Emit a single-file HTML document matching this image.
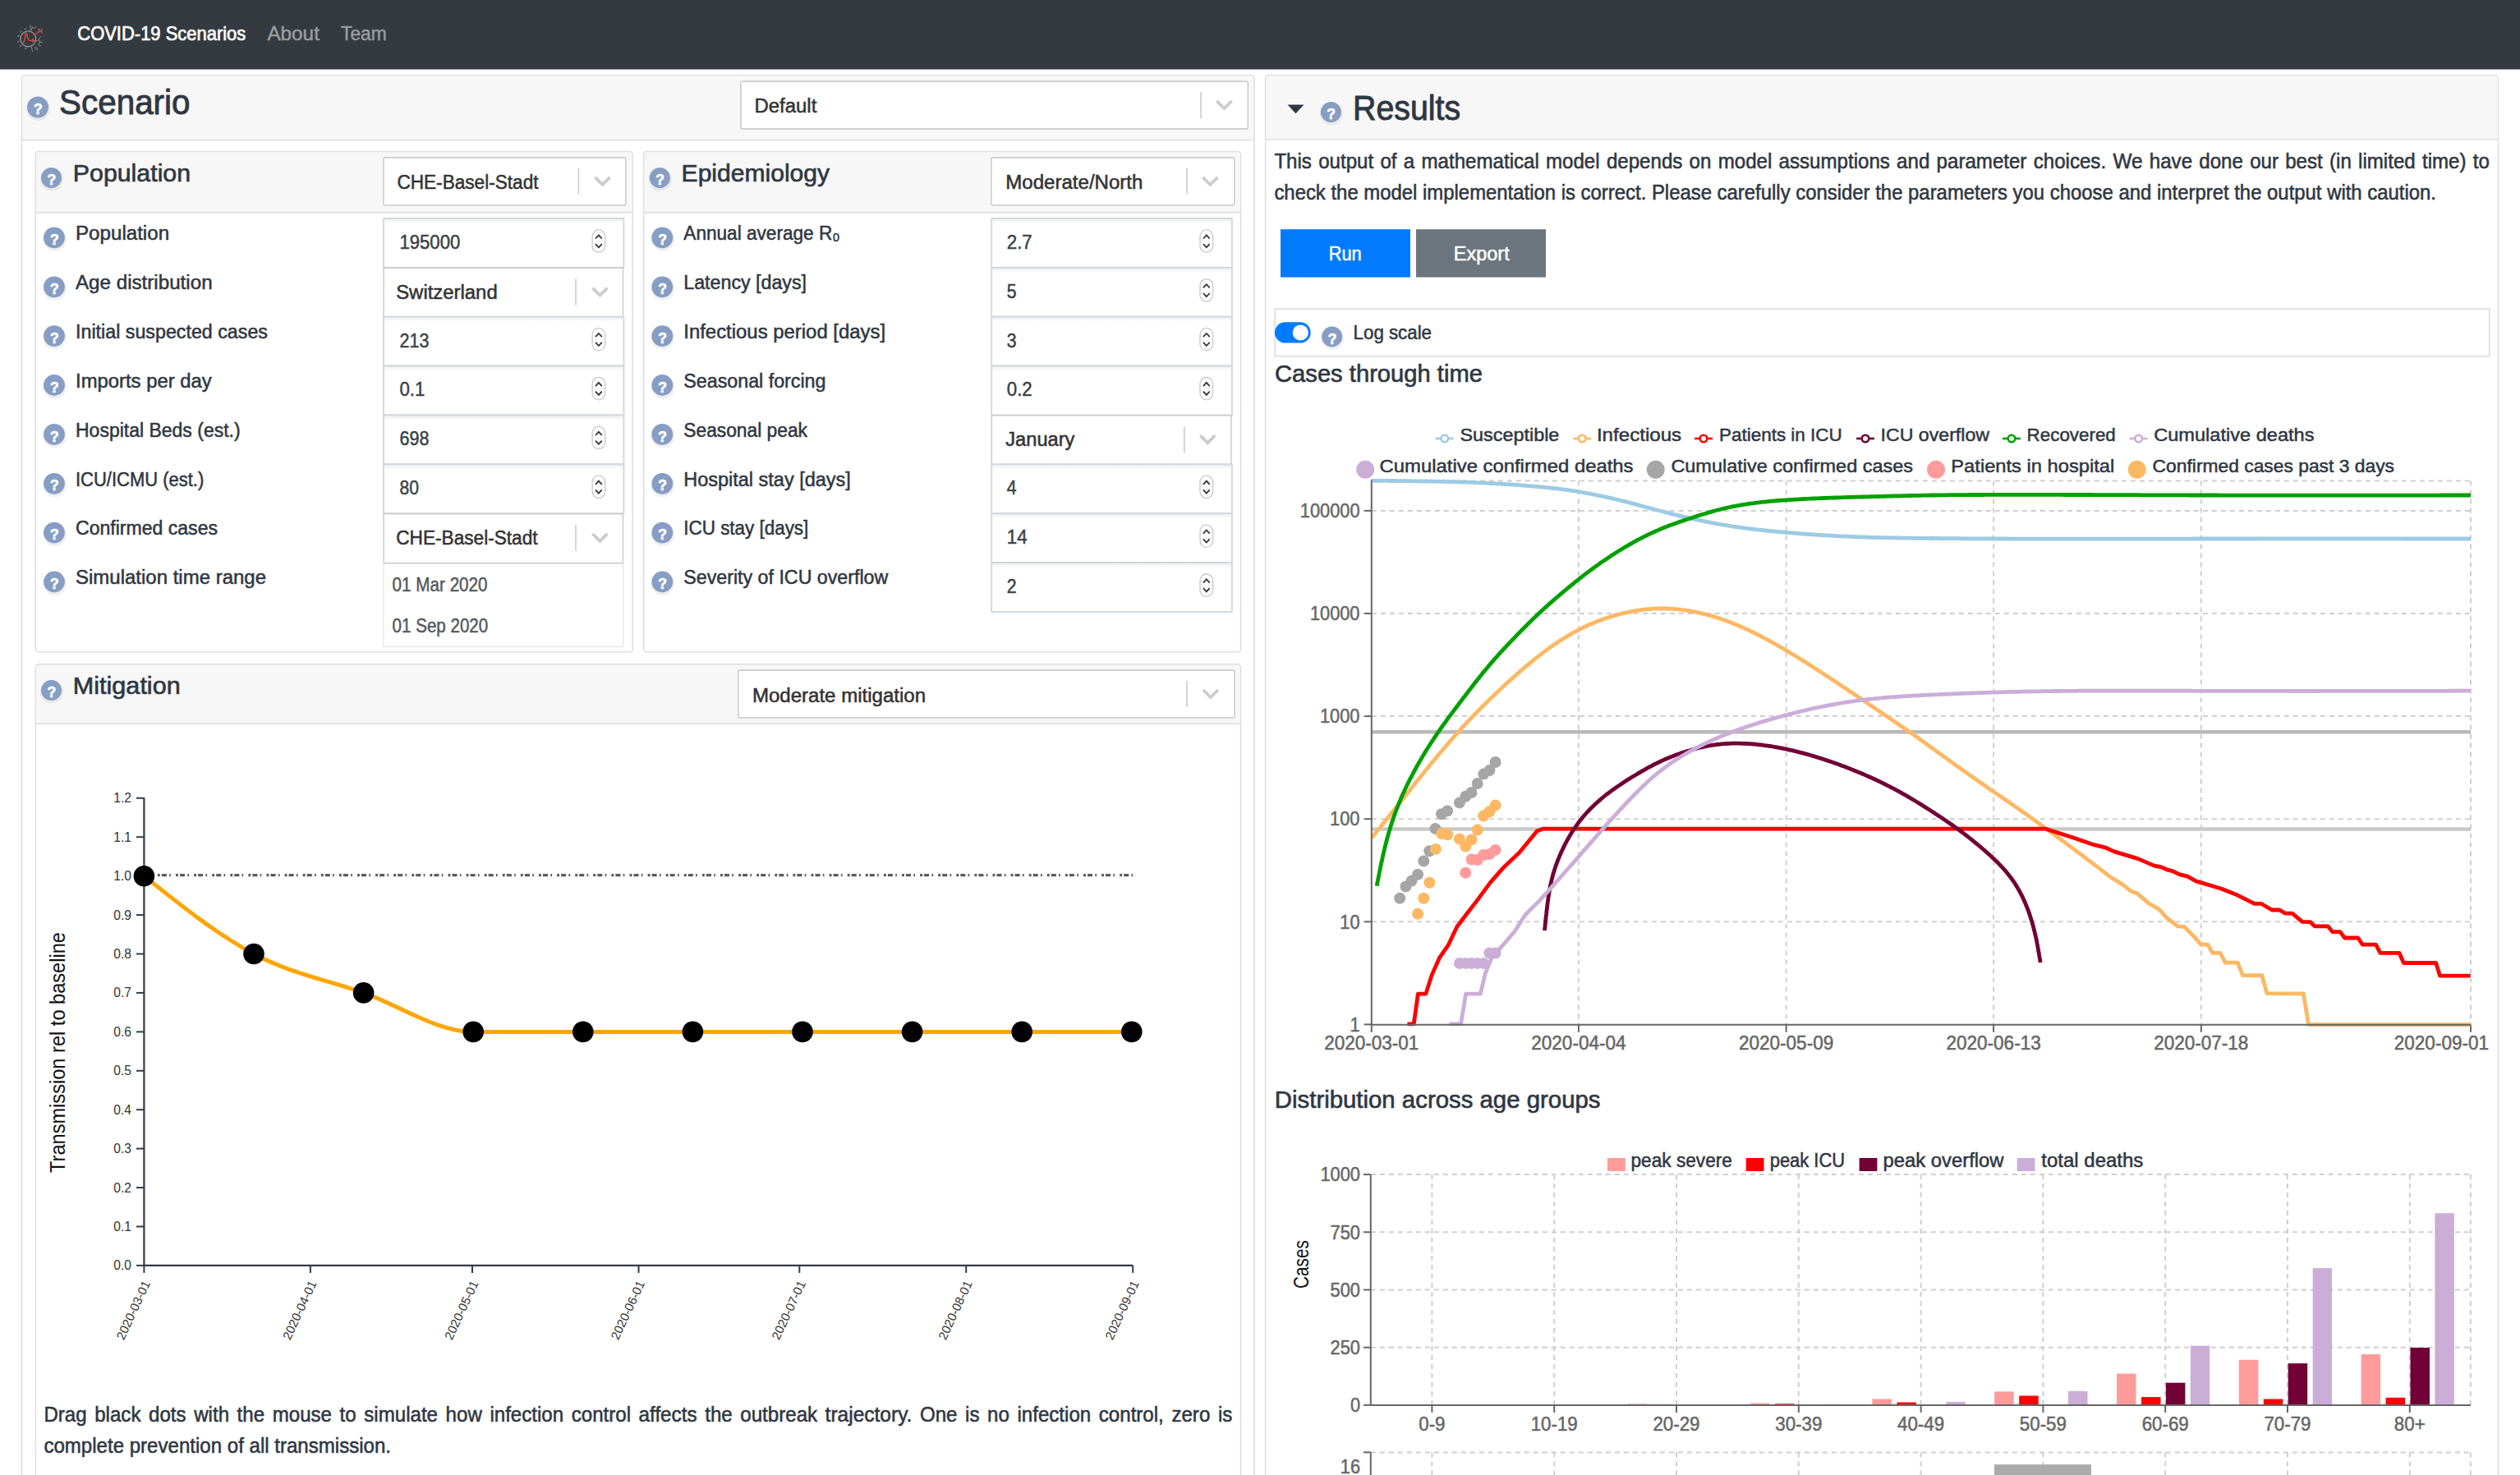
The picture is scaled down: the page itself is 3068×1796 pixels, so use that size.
<!DOCTYPE html>
<html><head><meta charset="utf-8"><title>COVID-19 Scenarios</title>
<style>
html,body{margin:0;padding:0;background:#fff;overflow:hidden;}
svg{display:block;font-family:"Liberation Sans", sans-serif;width:100vw;height:auto;}
</style></head><body>
<svg width="3068" height="1796" viewBox="0 0 3068 1796" preserveAspectRatio="xMinYMin meet">
<defs><linearGradient id="insh" x1="0" y1="0" x2="0" y2="1"><stop offset="0" stop-color="#000" stop-opacity="0.07"/><stop offset="1" stop-color="#000" stop-opacity="0"/></linearGradient></defs>
<rect x="0" y="0" width="3068" height="1796" fill="#fff"/>
<rect x="0.0" y="0.0" width="3068.0" height="84.5" fill="#343a40" />
<g fill="none" stroke-linecap="round" stroke-linejoin="round">
<circle cx="34.3" cy="47.3" r="9.4" stroke="#8d8d8d" stroke-width="1.4"/>
<path d="M28.2,52 L29.8,49.5 L30.8,43 L31.5,39.8 L32.6,41.5 L33.6,46 L35.5,49 L37.5,49.5 L41.3,49.4" stroke="#d9443f" stroke-width="1.5"/>
<path d="M40,47.6 L42.2,49.4 L40,51.2 Z" fill="#d9443f" stroke="#d9443f" stroke-width="1"/>
<path d="M42.4,42.5 L46.5,39 L48.5,35 M46.5,39 L50.5,37.5 L51.5,40.5 M48,38 L47,35.3 M50.5,37.5 L51.2,35" stroke="#d9443f" stroke-width="1.3"/>
<path d="M48.3,38.8 L50.3,37" stroke="#1f8a9a" stroke-width="1.6"/>
<path d="M37.2,37.6 L37,30.6 M38.5,36.5 L39.5,32.5 L41,34.5 L44.5,33" stroke="#8d8d8d" stroke-width="0.9"/>
<path d="M30.4,35.3 l0.9,-0.9 l0.9,0.9 l-0.9,0.9z M24.6,38.3 l0.9,-0.9 l0.9,0.9 l-0.9,0.9z M21.7,43.8 l0.9,-0.9 l0.9,0.9 l-0.9,0.9z M21.7,50.4 l0.9,-0.9 l0.9,0.9 l-0.9,0.9z M24.6,55.6 l0.9,-0.9 l0.9,0.9 l-0.9,0.9z M30.6,58.8 l0.9,-0.9 l0.9,0.9 l-0.9,0.9z" stroke="#8d8d8d" stroke-width="0.9"/>
<path d="M43.8,49.5 L46.5,49.2 M49.5,44.5 L47.5,47 L48.5,51 L51.8,52 M48.5,51 L47,54.5 L49.5,56" stroke="#8d8d8d" stroke-width="0.9"/>
<path d="M38.2,56.8 L39.5,63 M42,58 L44.5,61 L46.5,59.5 L43.5,57" stroke="#8d8d8d" stroke-width="0.9"/>
</g>
<text x="94.3" y="48.9" font-size="24.51" fill="#ffffff" stroke="#ffffff" stroke-width="0.7" textLength="205.0" lengthAdjust="spacingAndGlyphs" >COVID-19 Scenarios</text>
<text x="325.4" y="48.9" font-size="24.51" fill="#9a9da1" stroke="#9a9da1" stroke-width="0.5" textLength="63.5" lengthAdjust="spacingAndGlyphs" >About</text>
<text x="415.0" y="48.9" font-size="24.51" fill="#9a9da1" stroke="#9a9da1" stroke-width="0.5" textLength="55.8" lengthAdjust="spacingAndGlyphs" >Team</text>
<rect x="26.5" y="91.5" width="1500.5" height="1800" rx="4" fill="#fff" stroke="#dedede" stroke-width="1.6"/>
<path d="M27.3,170.5 V95.5 Q27.3,92.3 30.5,92.3 H1523 Q1526.2,92.3 1526.2,95.5 V170.5 Z" fill="#f7f7f7"/>
<line x1="26.5" y1="170.5" x2="1527.0" y2="170.5" stroke="#dedede" stroke-width="1.6" />
<circle cx="46.5" cy="132.5" r="14.5" fill="#000" opacity="0.06"/>
<circle cx="46.0" cy="130.5" r="13.0" fill="#879dc4"/>
<text x="46.3" y="139.1" font-size="17.5" font-weight="700" fill="#fff" stroke="#fff" stroke-width="0.6" text-anchor="middle">?</text>
<text x="72.1" y="139.3" font-size="42.96" fill="#2f3742" stroke="#2f3742" stroke-width="0.9450704225352112" textLength="159.4" lengthAdjust="spacingAndGlyphs" >Scenario</text>
<rect x="901.9" y="99.1" width="617.4" height="57.8" fill="#fff" stroke="#cccccc" stroke-width="1.6" rx="2" />
<text x="918.5" y="137.3" font-size="24.79" fill="#333333" stroke="#333333" stroke-width="0.5453521126760563" textLength="75.8" lengthAdjust="spacingAndGlyphs" >Default</text>
<line x1="1462.0" y1="112.0" x2="1462.0" y2="144.0" stroke="#cccccc" stroke-width="1.6" />
<path d="M1481.4,123.0 L1490.4,132.0 L1499.4,123.0" fill="none" stroke="#cccccc" stroke-width="3.8"/>
<rect x="43.3" y="184.6" width="726.9" height="609.2" rx="4" fill="#fff" stroke="#dedede" stroke-width="1.6"/>
<path d="M44.1,258.6 V188.6 Q44.1,185.4 47.3,185.4 H766.2 Q769.4,185.4 769.4,188.6 V258.6 Z" fill="#f7f7f7"/>
<line x1="43.3" y1="258.6" x2="770.2" y2="258.6" stroke="#dedede" stroke-width="1.6" />
<circle cx="63.0" cy="218.5" r="14.0" fill="#000" opacity="0.06"/>
<circle cx="62.5" cy="216.5" r="12.5" fill="#879dc4"/>
<text x="62.8" y="225.1" font-size="17.5" font-weight="700" fill="#fff" stroke="#fff" stroke-width="0.6" text-anchor="middle">?</text>
<text x="88.8" y="221.4" font-size="30.14" fill="#2f3742" stroke="#2f3742" stroke-width="0.6630985915492957" textLength="143.3" lengthAdjust="spacingAndGlyphs" >Population</text>
<rect x="466.9" y="191.9" width="294.9" height="57.8" fill="#fff" stroke="#cccccc" stroke-width="1.6" rx="2" />
<text x="483.4" y="230.1" font-size="24.79" fill="#333333" stroke="#333333" stroke-width="0.5453521126760563" textLength="172.1" lengthAdjust="spacingAndGlyphs" >CHE-Basel-Stadt</text>
<line x1="704.4" y1="204.8" x2="704.4" y2="236.8" stroke="#cccccc" stroke-width="1.6" />
<path d="M724.5,215.8 L733.5,224.8 L742.5,215.8" fill="none" stroke="#cccccc" stroke-width="3.8"/>
<circle cx="66.5" cy="291.4" r="14.4" fill="#000" opacity="0.06"/>
<circle cx="66.0" cy="289.4" r="12.9" fill="#879dc4"/>
<text x="66.3" y="298.0" font-size="17.5" font-weight="700" fill="#fff" stroke="#fff" stroke-width="0.6" text-anchor="middle">?</text>
<text x="92.0" y="292.1" font-size="23.94" fill="#2f3742" stroke="#2f3742" stroke-width="0.5267605633802817" textLength="114.1" lengthAdjust="spacingAndGlyphs" >Population</text>
<circle cx="66.5" cy="351.3" r="14.4" fill="#000" opacity="0.06"/>
<circle cx="66.0" cy="349.3" r="12.9" fill="#879dc4"/>
<text x="66.3" y="357.9" font-size="17.5" font-weight="700" fill="#fff" stroke="#fff" stroke-width="0.6" text-anchor="middle">?</text>
<text x="92.0" y="352.0" font-size="23.94" fill="#2f3742" stroke="#2f3742" stroke-width="0.5267605633802817" textLength="166.6" lengthAdjust="spacingAndGlyphs" >Age distribution</text>
<circle cx="66.5" cy="411.1" r="14.4" fill="#000" opacity="0.06"/>
<circle cx="66.0" cy="409.1" r="12.9" fill="#879dc4"/>
<text x="66.3" y="417.7" font-size="17.5" font-weight="700" fill="#fff" stroke="#fff" stroke-width="0.6" text-anchor="middle">?</text>
<text x="92.0" y="411.8" font-size="23.94" fill="#2f3742" stroke="#2f3742" stroke-width="0.5267605633802817" textLength="234.0" lengthAdjust="spacingAndGlyphs" >Initial suspected cases</text>
<circle cx="66.5" cy="471.0" r="14.4" fill="#000" opacity="0.06"/>
<circle cx="66.0" cy="469.0" r="12.9" fill="#879dc4"/>
<text x="66.3" y="477.6" font-size="17.5" font-weight="700" fill="#fff" stroke="#fff" stroke-width="0.6" text-anchor="middle">?</text>
<text x="92.0" y="471.7" font-size="23.94" fill="#2f3742" stroke="#2f3742" stroke-width="0.5267605633802817" textLength="165.7" lengthAdjust="spacingAndGlyphs" >Imports per day</text>
<circle cx="66.5" cy="530.9" r="14.4" fill="#000" opacity="0.06"/>
<circle cx="66.0" cy="528.9" r="12.9" fill="#879dc4"/>
<text x="66.3" y="537.5" font-size="17.5" font-weight="700" fill="#fff" stroke="#fff" stroke-width="0.6" text-anchor="middle">?</text>
<text x="92.0" y="531.6" font-size="23.94" fill="#2f3742" stroke="#2f3742" stroke-width="0.5267605633802817" textLength="200.6" lengthAdjust="spacingAndGlyphs" >Hospital Beds (est.)</text>
<circle cx="66.5" cy="590.8" r="14.4" fill="#000" opacity="0.06"/>
<circle cx="66.0" cy="588.8" r="12.9" fill="#879dc4"/>
<text x="66.3" y="597.4" font-size="17.5" font-weight="700" fill="#fff" stroke="#fff" stroke-width="0.6" text-anchor="middle">?</text>
<text x="92.0" y="591.5" font-size="23.94" fill="#2f3742" stroke="#2f3742" stroke-width="0.5267605633802817" textLength="156.3" lengthAdjust="spacingAndGlyphs" >ICU/ICMU (est.)</text>
<circle cx="66.5" cy="650.6" r="14.4" fill="#000" opacity="0.06"/>
<circle cx="66.0" cy="648.6" r="12.9" fill="#879dc4"/>
<text x="66.3" y="657.2" font-size="17.5" font-weight="700" fill="#fff" stroke="#fff" stroke-width="0.6" text-anchor="middle">?</text>
<text x="92.0" y="651.3" font-size="23.94" fill="#2f3742" stroke="#2f3742" stroke-width="0.5267605633802817" textLength="173.0" lengthAdjust="spacingAndGlyphs" >Confirmed cases</text>
<circle cx="66.5" cy="710.5" r="14.4" fill="#000" opacity="0.06"/>
<circle cx="66.0" cy="708.5" r="12.9" fill="#879dc4"/>
<text x="66.3" y="717.1" font-size="17.5" font-weight="700" fill="#fff" stroke="#fff" stroke-width="0.6" text-anchor="middle">?</text>
<text x="92.0" y="711.2" font-size="23.94" fill="#2f3742" stroke="#2f3742" stroke-width="0.5267605633802817" textLength="232.0" lengthAdjust="spacingAndGlyphs" >Simulation time range</text>
<rect x="467.0" y="265.9" width="292.4" height="59.9" fill="#fff" stroke="#cfd6de" stroke-width="1.8" />
<rect x="467.9" y="266.8" width="290.6" height="5.0" fill="url(#insh)" />
<text x="486.5" y="302.8" font-size="23.94" fill="#3b4249" stroke="#3b4249" stroke-width="0.5267605633802817" textLength="73.7" lengthAdjust="spacingAndGlyphs" >195000</text>
<rect x="721.1" y="279.9" width="15.6" height="27.3" rx="7.8" fill="#fff" stroke="#c9c9c9" stroke-width="1.3"/>
<path d="M725.0,290.5 L728.9,286.3 L732.8,290.5 M725.0,297.1 L728.9,301.3 L732.8,297.1" fill="none" stroke="#333" stroke-width="1.8"/>
<rect x="467.1" y="326.3" width="291.3" height="59.9" fill="#fff" stroke="#cccccc" stroke-width="1.5" />
<text x="482.2" y="363.7" font-size="24.79" fill="#333333" stroke="#333333" stroke-width="0.5453521126760563" textLength="123.5" lengthAdjust="spacingAndGlyphs" >Switzerland</text>
<line x1="701.0" y1="339.6" x2="701.0" y2="371.6" stroke="#cccccc" stroke-width="1.6" />
<path d="M721.4,350.6 L730.4,359.6 L739.4,350.6" fill="none" stroke="#cccccc" stroke-width="3.8"/>
<rect x="467.0" y="385.6" width="292.4" height="59.9" fill="#fff" stroke="#cfd6de" stroke-width="1.8" />
<rect x="467.9" y="386.5" width="290.6" height="5.0" fill="url(#insh)" />
<text x="486.5" y="422.5" font-size="23.94" fill="#3b4249" stroke="#3b4249" stroke-width="0.5267605633802817" textLength="35.9" lengthAdjust="spacingAndGlyphs" >213</text>
<rect x="721.1" y="399.6" width="15.6" height="27.3" rx="7.8" fill="#fff" stroke="#c9c9c9" stroke-width="1.3"/>
<path d="M725.0,410.2 L728.9,406.0 L732.8,410.2 M725.0,416.8 L728.9,421.0 L732.8,416.8" fill="none" stroke="#333" stroke-width="1.8"/>
<rect x="467.0" y="445.5" width="292.4" height="59.9" fill="#fff" stroke="#cfd6de" stroke-width="1.8" />
<rect x="467.9" y="446.4" width="290.6" height="5.0" fill="url(#insh)" />
<text x="486.5" y="482.4" font-size="23.94" fill="#3b4249" stroke="#3b4249" stroke-width="0.5267605633802817" textLength="30.9" lengthAdjust="spacingAndGlyphs" >0.1</text>
<rect x="721.1" y="459.5" width="15.6" height="27.3" rx="7.8" fill="#fff" stroke="#c9c9c9" stroke-width="1.3"/>
<path d="M725.0,470.1 L728.9,465.9 L732.8,470.1 M725.0,476.7 L728.9,480.9 L732.8,476.7" fill="none" stroke="#333" stroke-width="1.8"/>
<rect x="467.0" y="505.4" width="292.4" height="59.9" fill="#fff" stroke="#cfd6de" stroke-width="1.8" />
<rect x="467.9" y="506.3" width="290.6" height="5.0" fill="url(#insh)" />
<text x="486.5" y="542.3" font-size="23.94" fill="#3b4249" stroke="#3b4249" stroke-width="0.5267605633802817" textLength="35.9" lengthAdjust="spacingAndGlyphs" >698</text>
<rect x="721.1" y="519.4" width="15.6" height="27.3" rx="7.8" fill="#fff" stroke="#c9c9c9" stroke-width="1.3"/>
<path d="M725.0,530.0 L728.9,525.8 L732.8,530.0 M725.0,536.6 L728.9,540.8 L732.8,536.6" fill="none" stroke="#333" stroke-width="1.8"/>
<rect x="467.0" y="565.2" width="292.4" height="59.9" fill="#fff" stroke="#cfd6de" stroke-width="1.8" />
<rect x="467.9" y="566.1" width="290.6" height="5.0" fill="url(#insh)" />
<text x="486.5" y="602.1" font-size="23.94" fill="#3b4249" stroke="#3b4249" stroke-width="0.5267605633802817" textLength="23.5" lengthAdjust="spacingAndGlyphs" >80</text>
<rect x="721.1" y="579.2" width="15.6" height="27.3" rx="7.8" fill="#fff" stroke="#c9c9c9" stroke-width="1.3"/>
<path d="M725.0,589.8 L728.9,585.6 L732.8,589.8 M725.0,596.4 L728.9,600.6 L732.8,596.4" fill="none" stroke="#333" stroke-width="1.8"/>
<rect x="467.1" y="625.7" width="291.3" height="59.9" fill="#fff" stroke="#cccccc" stroke-width="1.5" />
<text x="482.2" y="663.0" font-size="24.79" fill="#333333" stroke="#333333" stroke-width="0.5453521126760563" textLength="172.4" lengthAdjust="spacingAndGlyphs" >CHE-Basel-Stadt</text>
<line x1="701.0" y1="638.9" x2="701.0" y2="670.9" stroke="#cccccc" stroke-width="1.6" />
<path d="M721.4,649.9 L730.4,658.9 L739.4,649.9" fill="none" stroke="#cccccc" stroke-width="3.8"/>
<rect x="466.9" y="686.5" width="292.0" height="100.8" fill="#fff" stroke="#e3e3e3" stroke-width="1.2" rx="2" />
<text x="477.6" y="719.5" font-size="23.24" fill="#555a60" stroke="#555a60" stroke-width="0.5112676056338028" textLength="116.0" lengthAdjust="spacingAndGlyphs" >01 Mar 2020</text>
<text x="477.6" y="769.6" font-size="23.24" fill="#555a60" stroke="#555a60" stroke-width="0.5112676056338028" textLength="116.6" lengthAdjust="spacingAndGlyphs" >01 Sep 2020</text>
<rect x="783.8" y="184.6" width="726.7" height="609.2" rx="4" fill="#fff" stroke="#dedede" stroke-width="1.6"/>
<path d="M784.6,258.6 V188.6 Q784.6,185.4 787.8,185.4 H1506.5 Q1509.7,185.4 1509.7,188.6 V258.6 Z" fill="#f7f7f7"/>
<line x1="783.8" y1="258.6" x2="1510.5" y2="258.6" stroke="#dedede" stroke-width="1.6" />
<circle cx="803.8" cy="218.5" r="14.0" fill="#000" opacity="0.06"/>
<circle cx="803.3" cy="216.5" r="12.5" fill="#879dc4"/>
<text x="803.6" y="225.1" font-size="17.5" font-weight="700" fill="#fff" stroke="#fff" stroke-width="0.6" text-anchor="middle">?</text>
<text x="829.6" y="221.4" font-size="30.14" fill="#2f3742" stroke="#2f3742" stroke-width="0.6630985915492957" textLength="180.5" lengthAdjust="spacingAndGlyphs" >Epidemiology</text>
<rect x="1206.8" y="191.9" width="296.1" height="57.8" fill="#fff" stroke="#cccccc" stroke-width="1.6" rx="2" />
<text x="1224.3" y="230.1" font-size="24.79" fill="#333333" stroke="#333333" stroke-width="0.5453521126760563" textLength="167.1" lengthAdjust="spacingAndGlyphs" >Moderate/North</text>
<line x1="1445.0" y1="204.8" x2="1445.0" y2="236.8" stroke="#cccccc" stroke-width="1.6" />
<path d="M1464.4,215.8 L1473.4,224.8 L1482.4,215.8" fill="none" stroke="#cccccc" stroke-width="3.8"/>
<circle cx="806.8" cy="291.4" r="14.4" fill="#000" opacity="0.06"/>
<circle cx="806.3" cy="289.4" r="12.9" fill="#879dc4"/>
<text x="806.6" y="298.0" font-size="17.5" font-weight="700" fill="#fff" stroke="#fff" stroke-width="0.6" text-anchor="middle">?</text>
<text x="832.3" y="292.1" font-size="23.94" fill="#2f3742" stroke="#2f3742" stroke-width="0.5267605633802817" textLength="190.4" lengthAdjust="spacingAndGlyphs" >Annual average R₀</text>
<circle cx="806.8" cy="351.3" r="14.4" fill="#000" opacity="0.06"/>
<circle cx="806.3" cy="349.3" r="12.9" fill="#879dc4"/>
<text x="806.6" y="357.9" font-size="17.5" font-weight="700" fill="#fff" stroke="#fff" stroke-width="0.6" text-anchor="middle">?</text>
<text x="832.3" y="352.0" font-size="23.94" fill="#2f3742" stroke="#2f3742" stroke-width="0.5267605633802817" textLength="149.7" lengthAdjust="spacingAndGlyphs" >Latency [days]</text>
<circle cx="806.8" cy="411.1" r="14.4" fill="#000" opacity="0.06"/>
<circle cx="806.3" cy="409.1" r="12.9" fill="#879dc4"/>
<text x="806.6" y="417.7" font-size="17.5" font-weight="700" fill="#fff" stroke="#fff" stroke-width="0.6" text-anchor="middle">?</text>
<text x="832.3" y="411.8" font-size="23.94" fill="#2f3742" stroke="#2f3742" stroke-width="0.5267605633802817" textLength="245.8" lengthAdjust="spacingAndGlyphs" >Infectious period [days]</text>
<circle cx="806.8" cy="471.0" r="14.4" fill="#000" opacity="0.06"/>
<circle cx="806.3" cy="469.0" r="12.9" fill="#879dc4"/>
<text x="806.6" y="477.6" font-size="17.5" font-weight="700" fill="#fff" stroke="#fff" stroke-width="0.6" text-anchor="middle">?</text>
<text x="832.3" y="471.7" font-size="23.94" fill="#2f3742" stroke="#2f3742" stroke-width="0.5267605633802817" textLength="173.2" lengthAdjust="spacingAndGlyphs" >Seasonal forcing</text>
<circle cx="806.8" cy="530.9" r="14.4" fill="#000" opacity="0.06"/>
<circle cx="806.3" cy="528.9" r="12.9" fill="#879dc4"/>
<text x="806.6" y="537.5" font-size="17.5" font-weight="700" fill="#fff" stroke="#fff" stroke-width="0.6" text-anchor="middle">?</text>
<text x="832.3" y="531.6" font-size="23.94" fill="#2f3742" stroke="#2f3742" stroke-width="0.5267605633802817" textLength="150.7" lengthAdjust="spacingAndGlyphs" >Seasonal peak</text>
<circle cx="806.8" cy="590.8" r="14.4" fill="#000" opacity="0.06"/>
<circle cx="806.3" cy="588.8" r="12.9" fill="#879dc4"/>
<text x="806.6" y="597.4" font-size="17.5" font-weight="700" fill="#fff" stroke="#fff" stroke-width="0.6" text-anchor="middle">?</text>
<text x="832.3" y="591.5" font-size="23.94" fill="#2f3742" stroke="#2f3742" stroke-width="0.5267605633802817" textLength="203.5" lengthAdjust="spacingAndGlyphs" >Hospital stay [days]</text>
<circle cx="806.8" cy="650.6" r="14.4" fill="#000" opacity="0.06"/>
<circle cx="806.3" cy="648.6" r="12.9" fill="#879dc4"/>
<text x="806.6" y="657.2" font-size="17.5" font-weight="700" fill="#fff" stroke="#fff" stroke-width="0.6" text-anchor="middle">?</text>
<text x="832.3" y="651.3" font-size="23.94" fill="#2f3742" stroke="#2f3742" stroke-width="0.5267605633802817" textLength="152.0" lengthAdjust="spacingAndGlyphs" >ICU stay [days]</text>
<circle cx="806.8" cy="710.5" r="14.4" fill="#000" opacity="0.06"/>
<circle cx="806.3" cy="708.5" r="12.9" fill="#879dc4"/>
<text x="806.6" y="717.1" font-size="17.5" font-weight="700" fill="#fff" stroke="#fff" stroke-width="0.6" text-anchor="middle">?</text>
<text x="832.3" y="711.2" font-size="23.94" fill="#2f3742" stroke="#2f3742" stroke-width="0.5267605633802817" textLength="249.0" lengthAdjust="spacingAndGlyphs" >Severity of ICU overflow</text>
<rect x="1207.2" y="265.9" width="292.7" height="59.9" fill="#fff" stroke="#cfd6de" stroke-width="1.8" />
<rect x="1208.1" y="266.8" width="290.9" height="5.0" fill="url(#insh)" />
<text x="1225.8" y="302.8" font-size="23.94" fill="#3b4249" stroke="#3b4249" stroke-width="0.5267605633802817" textLength="30.9" lengthAdjust="spacingAndGlyphs" >2.7</text>
<rect x="1461.0" y="279.9" width="15.6" height="27.3" rx="7.8" fill="#fff" stroke="#c9c9c9" stroke-width="1.3"/>
<path d="M1464.9,290.5 L1468.8,286.3 L1472.7,290.5 M1464.9,297.1 L1468.8,301.3 L1472.7,297.1" fill="none" stroke="#333" stroke-width="1.8"/>
<rect x="1207.2" y="325.8" width="292.7" height="59.9" fill="#fff" stroke="#cfd6de" stroke-width="1.8" />
<rect x="1208.1" y="326.7" width="290.9" height="5.0" fill="url(#insh)" />
<text x="1225.8" y="362.7" font-size="23.94" fill="#3b4249" stroke="#3b4249" stroke-width="0.5267605633802817" textLength="11.8" lengthAdjust="spacingAndGlyphs" >5</text>
<rect x="1461.0" y="339.8" width="15.6" height="27.3" rx="7.8" fill="#fff" stroke="#c9c9c9" stroke-width="1.3"/>
<path d="M1464.9,350.4 L1468.8,346.2 L1472.7,350.4 M1464.9,357.0 L1468.8,361.2 L1472.7,357.0" fill="none" stroke="#333" stroke-width="1.8"/>
<rect x="1207.2" y="385.6" width="292.7" height="59.9" fill="#fff" stroke="#cfd6de" stroke-width="1.8" />
<rect x="1208.1" y="386.5" width="290.9" height="5.0" fill="url(#insh)" />
<text x="1225.8" y="422.5" font-size="23.94" fill="#3b4249" stroke="#3b4249" stroke-width="0.5267605633802817" textLength="11.8" lengthAdjust="spacingAndGlyphs" >3</text>
<rect x="1461.0" y="399.6" width="15.6" height="27.3" rx="7.8" fill="#fff" stroke="#c9c9c9" stroke-width="1.3"/>
<path d="M1464.9,410.2 L1468.8,406.0 L1472.7,410.2 M1464.9,416.8 L1468.8,421.0 L1472.7,416.8" fill="none" stroke="#333" stroke-width="1.8"/>
<rect x="1207.2" y="445.5" width="292.7" height="59.9" fill="#fff" stroke="#cfd6de" stroke-width="1.8" />
<rect x="1208.1" y="446.4" width="290.9" height="5.0" fill="url(#insh)" />
<text x="1225.8" y="482.4" font-size="23.94" fill="#3b4249" stroke="#3b4249" stroke-width="0.5267605633802817" textLength="30.9" lengthAdjust="spacingAndGlyphs" >0.2</text>
<rect x="1461.0" y="459.5" width="15.6" height="27.3" rx="7.8" fill="#fff" stroke="#c9c9c9" stroke-width="1.3"/>
<path d="M1464.9,470.1 L1468.8,465.9 L1472.7,470.1 M1464.9,476.7 L1468.8,480.9 L1472.7,476.7" fill="none" stroke="#333" stroke-width="1.8"/>
<rect x="1207.3" y="505.9" width="291.6" height="59.9" fill="#fff" stroke="#cccccc" stroke-width="1.5" />
<text x="1224.3" y="543.3" font-size="24.79" fill="#333333" stroke="#333333" stroke-width="0.5453521126760563" textLength="84.1" lengthAdjust="spacingAndGlyphs" >January</text>
<line x1="1441.8" y1="519.2" x2="1441.8" y2="551.2" stroke="#cccccc" stroke-width="1.6" />
<path d="M1461.3,530.2 L1470.3,539.2 L1479.3,530.2" fill="none" stroke="#cccccc" stroke-width="3.8"/>
<rect x="1207.2" y="565.2" width="292.7" height="59.9" fill="#fff" stroke="#cfd6de" stroke-width="1.8" />
<rect x="1208.1" y="566.1" width="290.9" height="5.0" fill="url(#insh)" />
<text x="1225.8" y="602.1" font-size="23.94" fill="#3b4249" stroke="#3b4249" stroke-width="0.5267605633802817" textLength="11.8" lengthAdjust="spacingAndGlyphs" >4</text>
<rect x="1461.0" y="579.2" width="15.6" height="27.3" rx="7.8" fill="#fff" stroke="#c9c9c9" stroke-width="1.3"/>
<path d="M1464.9,589.8 L1468.8,585.6 L1472.7,589.8 M1464.9,596.4 L1468.8,600.6 L1472.7,596.4" fill="none" stroke="#333" stroke-width="1.8"/>
<rect x="1207.2" y="625.1" width="292.7" height="59.9" fill="#fff" stroke="#cfd6de" stroke-width="1.8" />
<rect x="1208.1" y="626.0" width="290.9" height="5.0" fill="url(#insh)" />
<text x="1225.8" y="662.0" font-size="23.94" fill="#3b4249" stroke="#3b4249" stroke-width="0.5267605633802817" textLength="24.8" lengthAdjust="spacingAndGlyphs" >14</text>
<rect x="1461.0" y="639.1" width="15.6" height="27.3" rx="7.8" fill="#fff" stroke="#c9c9c9" stroke-width="1.3"/>
<path d="M1464.9,649.7 L1468.8,645.5 L1472.7,649.7 M1464.9,656.3 L1468.8,660.5 L1472.7,656.3" fill="none" stroke="#333" stroke-width="1.8"/>
<rect x="1207.2" y="685.0" width="292.7" height="59.9" fill="#fff" stroke="#cfd6de" stroke-width="1.8" />
<rect x="1208.1" y="685.9" width="290.9" height="5.0" fill="url(#insh)" />
<text x="1225.8" y="721.9" font-size="23.94" fill="#3b4249" stroke="#3b4249" stroke-width="0.5267605633802817" textLength="11.8" lengthAdjust="spacingAndGlyphs" >2</text>
<rect x="1461.0" y="699.0" width="15.6" height="27.3" rx="7.8" fill="#fff" stroke="#c9c9c9" stroke-width="1.3"/>
<path d="M1464.9,709.6 L1468.8,705.4 L1472.7,709.6 M1464.9,716.2 L1468.8,720.4 L1472.7,716.2" fill="none" stroke="#333" stroke-width="1.8"/>
<rect x="43.4" y="808.9" width="1467.1" height="1091.1" rx="4" fill="#fff" stroke="#dedede" stroke-width="1.6"/>
<path d="M44.2,881.2 V812.9 Q44.2,809.7 47.4,809.7 H1506.5 Q1509.7,809.7 1509.7,812.9 V881.2 Z" fill="#f7f7f7"/>
<line x1="43.4" y1="881.2" x2="1510.5" y2="881.2" stroke="#dedede" stroke-width="1.6" />
<circle cx="63.0" cy="842.5" r="14.0" fill="#000" opacity="0.06"/>
<circle cx="62.5" cy="840.5" r="12.5" fill="#879dc4"/>
<text x="62.8" y="849.1" font-size="17.5" font-weight="700" fill="#fff" stroke="#fff" stroke-width="0.6" text-anchor="middle">?</text>
<text x="88.8" y="844.9" font-size="30.14" fill="#2f3742" stroke="#2f3742" stroke-width="0.6630985915492957" textLength="130.9" lengthAdjust="spacingAndGlyphs" >Mitigation</text>
<rect x="898.8" y="816.1" width="604.3" height="57.9" fill="#fff" stroke="#cccccc" stroke-width="1.6" rx="2" />
<text x="915.9" y="854.8" font-size="24.79" fill="#333333" stroke="#333333" stroke-width="0.5453521126760563" textLength="211.2" lengthAdjust="spacingAndGlyphs" >Moderate mitigation</text>
<line x1="1445.0" y1="829.0" x2="1445.0" y2="861.0" stroke="#cccccc" stroke-width="1.6" />
<path d="M1464.9,840.0 L1473.9,849.0 L1482.9,840.0" fill="none" stroke="#cccccc" stroke-width="3.8"/>
<line x1="175.4" y1="971.2" x2="175.4" y2="1540.9" stroke="#333b44" stroke-width="2.2" />
<line x1="175.4" y1="1540.9" x2="1379.2" y2="1540.9" stroke="#333b44" stroke-width="2.2" />
<line x1="166.0" y1="1540.9" x2="175.4" y2="1540.9" stroke="#333b44" stroke-width="2" />
<text x="160" y="1546.3" font-size="15.6" fill="#333" text-anchor="end">0.0</text>
<line x1="166.0" y1="1493.5" x2="175.4" y2="1493.5" stroke="#333b44" stroke-width="2" />
<text x="160" y="1498.9" font-size="15.6" fill="#333" text-anchor="end">0.1</text>
<line x1="166.0" y1="1446.1" x2="175.4" y2="1446.1" stroke="#333b44" stroke-width="2" />
<text x="160" y="1451.5" font-size="15.6" fill="#333" text-anchor="end">0.2</text>
<line x1="166.0" y1="1398.6" x2="175.4" y2="1398.6" stroke="#333b44" stroke-width="2" />
<text x="160" y="1404.0" font-size="15.6" fill="#333" text-anchor="end">0.3</text>
<line x1="166.0" y1="1351.2" x2="175.4" y2="1351.2" stroke="#333b44" stroke-width="2" />
<text x="160" y="1356.6" font-size="15.6" fill="#333" text-anchor="end">0.4</text>
<line x1="166.0" y1="1303.8" x2="175.4" y2="1303.8" stroke="#333b44" stroke-width="2" />
<text x="160" y="1309.2" font-size="15.6" fill="#333" text-anchor="end">0.5</text>
<line x1="166.0" y1="1256.4" x2="175.4" y2="1256.4" stroke="#333b44" stroke-width="2" />
<text x="160" y="1261.8" font-size="15.6" fill="#333" text-anchor="end">0.6</text>
<line x1="166.0" y1="1208.9" x2="175.4" y2="1208.9" stroke="#333b44" stroke-width="2" />
<text x="160" y="1214.3" font-size="15.6" fill="#333" text-anchor="end">0.7</text>
<line x1="166.0" y1="1161.5" x2="175.4" y2="1161.5" stroke="#333b44" stroke-width="2" />
<text x="160" y="1166.9" font-size="15.6" fill="#333" text-anchor="end">0.8</text>
<line x1="166.0" y1="1114.1" x2="175.4" y2="1114.1" stroke="#333b44" stroke-width="2" />
<text x="160" y="1119.5" font-size="15.6" fill="#333" text-anchor="end">0.9</text>
<line x1="166.0" y1="1066.7" x2="175.4" y2="1066.7" stroke="#333b44" stroke-width="2" />
<text x="160" y="1072.1" font-size="15.6" fill="#333" text-anchor="end">1.0</text>
<line x1="166.0" y1="1019.2" x2="175.4" y2="1019.2" stroke="#333b44" stroke-width="2" />
<text x="160" y="1024.6" font-size="15.6" fill="#333" text-anchor="end">1.1</text>
<line x1="166.0" y1="971.8" x2="175.4" y2="971.8" stroke="#333b44" stroke-width="2" />
<text x="160" y="977.2" font-size="15.6" fill="#333" text-anchor="end">1.2</text>
<line x1="175.4" y1="1540.9" x2="175.4" y2="1549.9" stroke="#333b44" stroke-width="2" />
<text transform="translate(183.3,1562.4) rotate(-65)" font-size="15.1" fill="#333" text-anchor="end">2020-03-01</text>
<line x1="377.9" y1="1540.9" x2="377.9" y2="1549.9" stroke="#333b44" stroke-width="2" />
<text transform="translate(385.8,1562.4) rotate(-65)" font-size="15.1" fill="#333" text-anchor="end">2020-04-01</text>
<line x1="575.0" y1="1540.9" x2="575.0" y2="1549.9" stroke="#333b44" stroke-width="2" />
<text transform="translate(582.9,1562.4) rotate(-65)" font-size="15.1" fill="#333" text-anchor="end">2020-05-01</text>
<line x1="777.5" y1="1540.9" x2="777.5" y2="1549.9" stroke="#333b44" stroke-width="2" />
<text transform="translate(785.4,1562.4) rotate(-65)" font-size="15.1" fill="#333" text-anchor="end">2020-06-01</text>
<line x1="973.3" y1="1540.9" x2="973.3" y2="1549.9" stroke="#333b44" stroke-width="2" />
<text transform="translate(981.2,1562.4) rotate(-65)" font-size="15.1" fill="#333" text-anchor="end">2020-07-01</text>
<line x1="1176.2" y1="1540.9" x2="1176.2" y2="1549.9" stroke="#333b44" stroke-width="2" />
<text transform="translate(1184.1,1562.4) rotate(-65)" font-size="15.1" fill="#333" text-anchor="end">2020-08-01</text>
<line x1="1379.2" y1="1540.9" x2="1379.2" y2="1549.9" stroke="#333b44" stroke-width="2" />
<text transform="translate(1387.1,1562.4) rotate(-65)" font-size="15.1" fill="#333" text-anchor="end">2020-09-01</text>
<line x1="191.9" y1="1065.7" x2="1379.0" y2="1065.7" stroke="#5c5c5c" stroke-width="3.3" stroke-dasharray="2.9,2.1,6,3.3,1.7,6.1"/>
<path d="M175.4,1066.7 C219.9,1102.2 264.5,1137.8 309.0,1161.5 C353.5,1185.2 398.1,1193.1 442.6,1208.9 C487.1,1224.7 531.7,1256.4 576.2,1256.4 C620.7,1256.4 665.3,1256.4 709.8,1256.4 C754.3,1256.4 798.9,1256.4 843.4,1256.4 C887.9,1256.4 932.5,1256.4 977.0,1256.4 C1021.5,1256.4 1066.1,1256.4 1110.6,1256.4 C1155.1,1256.4 1199.7,1256.4 1244.2,1256.4 C1288.7,1256.4 1333.3,1256.4 1377.8,1256.4" fill="none" stroke="#ffa500" stroke-width="5"/>
<circle cx="175.4" cy="1066.7" r="12.8" fill="#000"/>
<circle cx="309.0" cy="1161.5" r="12.8" fill="#000"/>
<circle cx="442.6" cy="1208.9" r="12.8" fill="#000"/>
<circle cx="576.2" cy="1256.4" r="12.8" fill="#000"/>
<circle cx="709.8" cy="1256.4" r="12.8" fill="#000"/>
<circle cx="843.4" cy="1256.4" r="12.8" fill="#000"/>
<circle cx="977.0" cy="1256.4" r="12.8" fill="#000"/>
<circle cx="1110.6" cy="1256.4" r="12.8" fill="#000"/>
<circle cx="1244.2" cy="1256.4" r="12.8" fill="#000"/>
<circle cx="1377.8" cy="1256.4" r="12.8" fill="#000"/>
<text transform="translate(79.3,1281.5) rotate(-90)" font-size="25.5" fill="#111" text-anchor="middle" textLength="293" lengthAdjust="spacingAndGlyphs">Transmission rel to baseline</text>
<text x="53.4" y="1731.1" font-size="25.63" fill="#2f3742" stroke="#2f3742" stroke-width="0.563943661971831" textLength="52.2" lengthAdjust="spacingAndGlyphs">Drag</text>
<text x="115.2" y="1731.1" font-size="25.63" fill="#2f3742" stroke="#2f3742" stroke-width="0.563943661971831" textLength="56.3" lengthAdjust="spacingAndGlyphs">black</text>
<text x="181.0" y="1731.1" font-size="25.63" fill="#2f3742" stroke="#2f3742" stroke-width="0.563943661971831" textLength="45.5" lengthAdjust="spacingAndGlyphs">dots</text>
<text x="236.2" y="1731.1" font-size="25.63" fill="#2f3742" stroke="#2f3742" stroke-width="0.563943661971831" textLength="42.9" lengthAdjust="spacingAndGlyphs">with</text>
<text x="288.6" y="1731.1" font-size="25.63" fill="#2f3742" stroke="#2f3742" stroke-width="0.563943661971831" textLength="33.5" lengthAdjust="spacingAndGlyphs">the</text>
<text x="331.7" y="1731.1" font-size="25.63" fill="#2f3742" stroke="#2f3742" stroke-width="0.563943661971831" textLength="72.3" lengthAdjust="spacingAndGlyphs">mouse</text>
<text x="413.6" y="1731.1" font-size="25.63" fill="#2f3742" stroke="#2f3742" stroke-width="0.563943661971831" textLength="20.1" lengthAdjust="spacingAndGlyphs">to</text>
<text x="443.3" y="1731.1" font-size="25.63" fill="#2f3742" stroke="#2f3742" stroke-width="0.563943661971831" textLength="89.7" lengthAdjust="spacingAndGlyphs">simulate</text>
<text x="542.6" y="1731.1" font-size="25.63" fill="#2f3742" stroke="#2f3742" stroke-width="0.563943661971831" textLength="44.2" lengthAdjust="spacingAndGlyphs">how</text>
<text x="596.4" y="1731.1" font-size="25.63" fill="#2f3742" stroke="#2f3742" stroke-width="0.563943661971831" textLength="89.7" lengthAdjust="spacingAndGlyphs">infection</text>
<text x="695.7" y="1731.1" font-size="25.63" fill="#2f3742" stroke="#2f3742" stroke-width="0.563943661971831" textLength="72.3" lengthAdjust="spacingAndGlyphs">control</text>
<text x="777.6" y="1731.1" font-size="25.63" fill="#2f3742" stroke="#2f3742" stroke-width="0.563943661971831" textLength="71.0" lengthAdjust="spacingAndGlyphs">affects</text>
<text x="858.2" y="1731.1" font-size="25.63" fill="#2f3742" stroke="#2f3742" stroke-width="0.563943661971831" textLength="33.5" lengthAdjust="spacingAndGlyphs">the</text>
<text x="901.3" y="1731.1" font-size="25.63" fill="#2f3742" stroke="#2f3742" stroke-width="0.563943661971831" textLength="93.8" lengthAdjust="spacingAndGlyphs">outbreak</text>
<text x="1004.6" y="1731.1" font-size="25.63" fill="#2f3742" stroke="#2f3742" stroke-width="0.563943661971831" textLength="105.8" lengthAdjust="spacingAndGlyphs">trajectory.</text>
<text x="1120.0" y="1731.1" font-size="25.63" fill="#2f3742" stroke="#2f3742" stroke-width="0.563943661971831" textLength="45.5" lengthAdjust="spacingAndGlyphs">One</text>
<text x="1175.1" y="1731.1" font-size="25.63" fill="#2f3742" stroke="#2f3742" stroke-width="0.563943661971831" textLength="17.4" lengthAdjust="spacingAndGlyphs">is</text>
<text x="1202.1" y="1731.1" font-size="25.63" fill="#2f3742" stroke="#2f3742" stroke-width="0.563943661971831" textLength="26.8" lengthAdjust="spacingAndGlyphs">no</text>
<text x="1238.5" y="1731.1" font-size="25.63" fill="#2f3742" stroke="#2f3742" stroke-width="0.563943661971831" textLength="89.7" lengthAdjust="spacingAndGlyphs">infection</text>
<text x="1337.8" y="1731.1" font-size="25.63" fill="#2f3742" stroke="#2f3742" stroke-width="0.563943661971831" textLength="79.0" lengthAdjust="spacingAndGlyphs">control,</text>
<text x="1426.4" y="1731.1" font-size="25.63" fill="#2f3742" stroke="#2f3742" stroke-width="0.563943661971831" textLength="46.9" lengthAdjust="spacingAndGlyphs">zero</text>
<text x="1482.9" y="1731.1" font-size="25.63" fill="#2f3742" stroke="#2f3742" stroke-width="0.563943661971831" textLength="17.4" lengthAdjust="spacingAndGlyphs">is</text>
<text x="53.4" y="1768.6" font-size="25.63" fill="#2f3742" stroke="#2f3742" stroke-width="0.563943661971831" textLength="422.6" lengthAdjust="spacingAndGlyphs" >complete prevention of all transmission.</text>
<rect x="1540.7" y="91.6" width="1500.7" height="1800" rx="4" fill="#fff" stroke="#dedede" stroke-width="1.6"/>
<path d="M1541.5,170 V95.6 Q1541.5,92.4 1544.7,92.4 H3037.4 Q3040.6,92.4 3040.6,95.6 V170 Z" fill="#f7f7f7"/>
<line x1="1540.7" y1="170.0" x2="3041.4" y2="170.0" stroke="#dedede" stroke-width="1.6" />
<path d="M1567.6,127.4 L1587.4,127.4 L1577.5,138.2 Z" fill="#2f3742"/>
<circle cx="1620.9" cy="138.5" r="14.0" fill="#000" opacity="0.06"/>
<circle cx="1620.4" cy="136.5" r="12.5" fill="#879dc4"/>
<text x="1620.7" y="145.1" font-size="17.5" font-weight="700" fill="#fff" stroke="#fff" stroke-width="0.6" text-anchor="middle">?</text>
<text x="1647.0" y="145.7" font-size="43.10" fill="#2f3742" stroke="#2f3742" stroke-width="0.948169014084507" textLength="131.1" lengthAdjust="spacingAndGlyphs" >Results</text>
<text x="1551.4" y="205.3" font-size="25.63" fill="#2f3742" stroke="#2f3742" stroke-width="0.563943661971831" textLength="45.5" lengthAdjust="spacingAndGlyphs">This</text>
<text x="1605.2" y="205.3" font-size="25.63" fill="#2f3742" stroke="#2f3742" stroke-width="0.563943661971831" textLength="67.0" lengthAdjust="spacingAndGlyphs">output</text>
<text x="1680.4" y="205.3" font-size="25.63" fill="#2f3742" stroke="#2f3742" stroke-width="0.563943661971831" textLength="20.1" lengthAdjust="spacingAndGlyphs">of</text>
<text x="1708.8" y="205.3" font-size="25.63" fill="#2f3742" stroke="#2f3742" stroke-width="0.563943661971831" textLength="13.4" lengthAdjust="spacingAndGlyphs">a</text>
<text x="1730.5" y="205.3" font-size="25.63" fill="#2f3742" stroke="#2f3742" stroke-width="0.563943661971831" textLength="143.3" lengthAdjust="spacingAndGlyphs">mathematical</text>
<text x="1882.0" y="205.3" font-size="25.63" fill="#2f3742" stroke="#2f3742" stroke-width="0.563943661971831" textLength="65.6" lengthAdjust="spacingAndGlyphs">model</text>
<text x="1955.9" y="205.3" font-size="25.63" fill="#2f3742" stroke="#2f3742" stroke-width="0.563943661971831" textLength="92.5" lengthAdjust="spacingAndGlyphs">depends</text>
<text x="2056.6" y="205.3" font-size="25.63" fill="#2f3742" stroke="#2f3742" stroke-width="0.563943661971831" textLength="26.8" lengthAdjust="spacingAndGlyphs">on</text>
<text x="2091.7" y="205.3" font-size="25.63" fill="#2f3742" stroke="#2f3742" stroke-width="0.563943661971831" textLength="65.6" lengthAdjust="spacingAndGlyphs">model</text>
<text x="2165.6" y="205.3" font-size="25.63" fill="#2f3742" stroke="#2f3742" stroke-width="0.563943661971831" textLength="135.3" lengthAdjust="spacingAndGlyphs">assumptions</text>
<text x="2309.1" y="205.3" font-size="25.63" fill="#2f3742" stroke="#2f3742" stroke-width="0.563943661971831" textLength="40.2" lengthAdjust="spacingAndGlyphs">and</text>
<text x="2357.6" y="205.3" font-size="25.63" fill="#2f3742" stroke="#2f3742" stroke-width="0.563943661971831" textLength="109.8" lengthAdjust="spacingAndGlyphs">parameter</text>
<text x="2475.7" y="205.3" font-size="25.63" fill="#2f3742" stroke="#2f3742" stroke-width="0.563943661971831" textLength="88.4" lengthAdjust="spacingAndGlyphs">choices.</text>
<text x="2572.4" y="205.3" font-size="25.63" fill="#2f3742" stroke="#2f3742" stroke-width="0.563943661971831" textLength="36.1" lengthAdjust="spacingAndGlyphs">We</text>
<text x="2616.8" y="205.3" font-size="25.63" fill="#2f3742" stroke="#2f3742" stroke-width="0.563943661971831" textLength="52.3" lengthAdjust="spacingAndGlyphs">have</text>
<text x="2677.3" y="205.3" font-size="25.63" fill="#2f3742" stroke="#2f3742" stroke-width="0.563943661971831" textLength="53.6" lengthAdjust="spacingAndGlyphs">done</text>
<text x="2739.2" y="205.3" font-size="25.63" fill="#2f3742" stroke="#2f3742" stroke-width="0.563943661971831" textLength="34.8" lengthAdjust="spacingAndGlyphs">our</text>
<text x="2782.2" y="205.3" font-size="25.63" fill="#2f3742" stroke="#2f3742" stroke-width="0.563943661971831" textLength="45.5" lengthAdjust="spacingAndGlyphs">best</text>
<text x="2836.1" y="205.3" font-size="25.63" fill="#2f3742" stroke="#2f3742" stroke-width="0.563943661971831" textLength="26.8" lengthAdjust="spacingAndGlyphs">(in</text>
<text x="2871.1" y="205.3" font-size="25.63" fill="#2f3742" stroke="#2f3742" stroke-width="0.563943661971831" textLength="69.6" lengthAdjust="spacingAndGlyphs">limited</text>
<text x="2949.0" y="205.3" font-size="25.63" fill="#2f3742" stroke="#2f3742" stroke-width="0.563943661971831" textLength="53.5" lengthAdjust="spacingAndGlyphs">time)</text>
<text x="3010.8" y="205.3" font-size="25.63" fill="#2f3742" stroke="#2f3742" stroke-width="0.563943661971831" textLength="20.1" lengthAdjust="spacingAndGlyphs">to</text>
<text x="1551.4" y="242.8" font-size="25.63" fill="#2f3742" stroke="#2f3742" stroke-width="0.563943661971831" textLength="1414.6" lengthAdjust="spacingAndGlyphs" >check the model implementation is correct. Please carefully consider the parameters you choose and interpret the output with caution.</text>
<rect x="1559.0" y="279.2" width="158.0" height="58.4" fill="#007bff" />
<text x="1617.7" y="316.8" font-size="23.66" fill="#fff" stroke="#fff" stroke-width="0.5205633802816901" textLength="40.0" lengthAdjust="spacingAndGlyphs" >Run</text>
<rect x="1724.0" y="279.2" width="158.0" height="58.4" fill="#6c757d" />
<text x="1769.8" y="316.8" font-size="23.66" fill="#fff" stroke="#fff" stroke-width="0.5205633802816901" textLength="67.9" lengthAdjust="spacingAndGlyphs" >Export</text>
<rect x="1552.1" y="376.1" width="1478.7" height="57.6" fill="#fff" stroke="#d5dadf" stroke-width="1.5" />
<rect x="1552" y="392.3" width="43.7" height="25.3" rx="12.65" fill="#007bff"/>
<circle cx="1583.3" cy="405" r="9.6" fill="#fff"/>
<circle cx="1622.2" cy="412.0" r="14.0" fill="#000" opacity="0.06"/>
<circle cx="1621.7" cy="410.0" r="12.5" fill="#879dc4"/>
<text x="1622.0" y="418.6" font-size="17.5" font-weight="700" fill="#fff" stroke="#fff" stroke-width="0.6" text-anchor="middle">?</text>
<text x="1647.6" y="413.0" font-size="23.66" fill="#2f3742" stroke="#2f3742" stroke-width="0.5205633802816901" textLength="95.4" lengthAdjust="spacingAndGlyphs" >Log scale</text>
<text x="1552.0" y="465.0" font-size="28.59" fill="#2f3742" stroke="#2f3742" stroke-width="0.6290140845070423" textLength="253.0" lengthAdjust="spacingAndGlyphs" >Cases through time</text>
<line x1="1669.8" y1="621.9" x2="3008.0" y2="621.9" stroke="#cfcfcf" stroke-width="2" stroke-dasharray="6,5"/>
<line x1="1669.8" y1="747.0" x2="3008.0" y2="747.0" stroke="#cfcfcf" stroke-width="2" stroke-dasharray="6,5"/>
<line x1="1669.8" y1="872.1" x2="3008.0" y2="872.1" stroke="#cfcfcf" stroke-width="2" stroke-dasharray="6,5"/>
<line x1="1669.8" y1="997.2" x2="3008.0" y2="997.2" stroke="#cfcfcf" stroke-width="2" stroke-dasharray="6,5"/>
<line x1="1669.8" y1="1122.3" x2="3008.0" y2="1122.3" stroke="#cfcfcf" stroke-width="2" stroke-dasharray="6,5"/>
<line x1="1669.8" y1="585.4" x2="3008.0" y2="585.4" stroke="#cfcfcf" stroke-width="2" stroke-dasharray="6,5"/>
<line x1="1669.8" y1="1247.8" x2="1669.8" y2="1256.8" stroke="#666666" stroke-width="2" />
<text x="1669.8" y="1278.0" font-size="23.10" fill="#666666" stroke="#666666" stroke-width="0.508169014084507" text-anchor="middle" textLength="115.2" lengthAdjust="spacingAndGlyphs" >2020-03-01</text>
<line x1="1921.9" y1="585.4" x2="1921.9" y2="1247.8" stroke="#cfcfcf" stroke-width="2" stroke-dasharray="6,5"/>
<line x1="1921.9" y1="1247.8" x2="1921.9" y2="1256.8" stroke="#666666" stroke-width="2" />
<text x="1921.9" y="1278.0" font-size="23.10" fill="#666666" stroke="#666666" stroke-width="0.508169014084507" text-anchor="middle" textLength="115.2" lengthAdjust="spacingAndGlyphs" >2020-04-04</text>
<line x1="2174.6" y1="585.4" x2="2174.6" y2="1247.8" stroke="#cfcfcf" stroke-width="2" stroke-dasharray="6,5"/>
<line x1="2174.6" y1="1247.8" x2="2174.6" y2="1256.8" stroke="#666666" stroke-width="2" />
<text x="2174.6" y="1278.0" font-size="23.10" fill="#666666" stroke="#666666" stroke-width="0.508169014084507" text-anchor="middle" textLength="115.2" lengthAdjust="spacingAndGlyphs" >2020-05-09</text>
<line x1="2427.1" y1="585.4" x2="2427.1" y2="1247.8" stroke="#cfcfcf" stroke-width="2" stroke-dasharray="6,5"/>
<line x1="2427.1" y1="1247.8" x2="2427.1" y2="1256.8" stroke="#666666" stroke-width="2" />
<text x="2427.1" y="1278.0" font-size="23.10" fill="#666666" stroke="#666666" stroke-width="0.508169014084507" text-anchor="middle" textLength="115.2" lengthAdjust="spacingAndGlyphs" >2020-06-13</text>
<line x1="2679.8" y1="585.4" x2="2679.8" y2="1247.8" stroke="#cfcfcf" stroke-width="2" stroke-dasharray="6,5"/>
<line x1="2679.8" y1="1247.8" x2="2679.8" y2="1256.8" stroke="#666666" stroke-width="2" />
<text x="2679.8" y="1278.0" font-size="23.10" fill="#666666" stroke="#666666" stroke-width="0.508169014084507" text-anchor="middle" textLength="115.2" lengthAdjust="spacingAndGlyphs" >2020-07-18</text>
<line x1="3008.0" y1="585.4" x2="3008.0" y2="1247.8" stroke="#cfcfcf" stroke-width="2" stroke-dasharray="6,5"/>
<line x1="3008.0" y1="1247.8" x2="3008.0" y2="1256.8" stroke="#666666" stroke-width="2" />
<text x="3030.0" y="1278.0" font-size="23.10" fill="#666666" stroke="#666666" stroke-width="0.508169014084507" text-anchor="end" textLength="115.2" lengthAdjust="spacingAndGlyphs" >2020-09-01</text>
<line x1="1660.7" y1="621.9" x2="1669.8" y2="621.9" stroke="#666666" stroke-width="2" />
<text x="1655.5" y="630.1" font-size="23.10" fill="#666666" stroke="#666666" stroke-width="0.508169014084507" text-anchor="end" textLength="72.7" lengthAdjust="spacingAndGlyphs" >100000</text>
<line x1="1660.7" y1="747.0" x2="1669.8" y2="747.0" stroke="#666666" stroke-width="2" />
<text x="1655.5" y="755.2" font-size="23.10" fill="#666666" stroke="#666666" stroke-width="0.508169014084507" text-anchor="end" textLength="60.6" lengthAdjust="spacingAndGlyphs" >10000</text>
<line x1="1660.7" y1="872.1" x2="1669.8" y2="872.1" stroke="#666666" stroke-width="2" />
<text x="1655.5" y="880.3" font-size="23.10" fill="#666666" stroke="#666666" stroke-width="0.508169014084507" text-anchor="end" textLength="48.5" lengthAdjust="spacingAndGlyphs" >1000</text>
<line x1="1660.7" y1="997.2" x2="1669.8" y2="997.2" stroke="#666666" stroke-width="2" />
<text x="1655.5" y="1005.4" font-size="23.10" fill="#666666" stroke="#666666" stroke-width="0.508169014084507" text-anchor="end" textLength="36.4" lengthAdjust="spacingAndGlyphs" >100</text>
<line x1="1660.7" y1="1122.3" x2="1669.8" y2="1122.3" stroke="#666666" stroke-width="2" />
<text x="1655.5" y="1130.5" font-size="23.10" fill="#666666" stroke="#666666" stroke-width="0.508169014084507" text-anchor="end" textLength="24.2" lengthAdjust="spacingAndGlyphs" >10</text>
<line x1="1660.7" y1="1247.4" x2="1669.8" y2="1247.4" stroke="#666666" stroke-width="2" />
<text x="1655.5" y="1255.6" font-size="23.10" fill="#666666" stroke="#666666" stroke-width="0.508169014084507" text-anchor="end" textLength="12.1" lengthAdjust="spacingAndGlyphs" >1</text>
<line x1="1669.8" y1="891.3" x2="3008.0" y2="891.3" stroke="#b9b9b9" stroke-width="4.6" />
<line x1="1669.8" y1="1009.5" x2="3008.0" y2="1009.5" stroke="#c9c9c9" stroke-width="4.6" />
<path d="M1669.5,585.3 L1671.5,585.3 L1673.5,585.3 L1675.5,585.3 L1677.5,585.3 L1679.5,585.4 L1681.5,585.4 L1683.5,585.4 L1685.5,585.4 L1687.5,585.4 L1689.5,585.4 L1691.5,585.5 L1693.5,585.5 L1695.5,585.5 L1697.5,585.5 L1699.5,585.5 L1701.5,585.6 L1703.5,585.6 L1705.5,585.6 L1707.5,585.6 L1709.5,585.7 L1711.5,585.7 L1713.5,585.7 L1715.4,585.7 L1717.4,585.8 L1719.4,585.8 L1721.4,585.8 L1723.4,585.8 L1725.4,585.9 L1727.4,585.9 L1729.4,585.9 L1731.4,586.0 L1733.4,586.0 L1735.4,586.0 L1737.4,586.0 L1739.4,586.1 L1741.4,586.1 L1743.4,586.2 L1745.4,586.2 L1747.4,586.2 L1749.4,586.3 L1751.4,586.3 L1753.4,586.4 L1755.4,586.4 L1757.4,586.4 L1759.4,586.5 L1761.4,586.5 L1763.4,586.6 L1765.4,586.6 L1767.4,586.7 L1769.4,586.7 L1771.4,586.8 L1773.4,586.9 L1775.4,586.9 L1777.4,587.0 L1779.4,587.0 L1781.4,587.1 L1783.4,587.2 L1785.4,587.2 L1787.4,587.3 L1789.4,587.4 L1791.3,587.4 L1793.3,587.5 L1795.3,587.6 L1797.3,587.7 L1799.3,587.8 L1801.3,587.8 L1803.3,587.9 L1805.3,588.0 L1807.3,588.1 L1809.3,588.2 L1811.3,588.3 L1813.3,588.4 L1815.3,588.5 L1817.3,588.6 L1819.3,588.7 L1821.3,588.8 L1823.3,589.0 L1825.3,589.1 L1827.3,589.2 L1829.3,589.3 L1831.3,589.4 L1833.3,589.6 L1835.2,589.7 L1837.2,589.8 L1839.2,590.0 L1841.2,590.1 L1843.2,590.2 L1845.2,590.4 L1847.2,590.5 L1849.2,590.7 L1851.2,590.8 L1853.2,591.0 L1855.2,591.1 L1857.2,591.3 L1859.2,591.5 L1861.1,591.6 L1863.1,591.8 L1865.1,592.0 L1867.1,592.1 L1869.1,592.3 L1871.1,592.5 L1873.1,592.7 L1875.1,592.9 L1877.1,593.0 L1879.1,593.2 L1881.0,593.4 L1883.0,593.6 L1885.0,593.8 L1887.0,594.0 L1889.0,594.3 L1891.0,594.5 L1893.0,594.7 L1894.9,594.9 L1896.9,595.2 L1898.9,595.4 L1900.9,595.7 L1902.9,595.9 L1904.8,596.2 L1906.8,596.5 L1908.8,596.7 L1910.8,597.0 L1912.7,597.3 L1914.7,597.6 L1916.7,597.9 L1918.7,598.2 L1920.6,598.5 L1922.6,598.9 L1924.6,599.2 L1926.5,599.5 L1928.5,599.9 L1930.5,600.2 L1932.4,600.6 L1934.4,600.9 L1936.4,601.3 L1938.3,601.7 L1940.3,602.1 L1942.2,602.5 L1944.2,602.8 L1946.2,603.3 L1948.1,603.7 L1950.1,604.1 L1952.0,604.5 L1954.0,604.9 L1955.9,605.3 L1957.9,605.8 L1959.8,606.2 L1961.8,606.7 L1963.7,607.1 L1965.6,607.6 L1967.6,608.0 L1969.5,608.5 L1971.5,609.0 L1973.4,609.5 L1975.4,609.9 L1977.3,610.4 L1979.2,610.9 L1981.2,611.4 L1983.1,611.9 L1985.0,612.4 L1987.0,612.9 L1988.9,613.4 L1990.8,613.9 L1992.8,614.5 L1994.7,615.0 L1996.6,615.5 L1998.6,616.0 L2000.5,616.5 L2002.4,617.0 L2004.3,617.6 L2006.3,618.1 L2008.2,618.6 L2010.1,619.1 L2012.1,619.6 L2014.0,620.1 L2015.9,620.7 L2017.9,621.2 L2019.8,621.7 L2021.7,622.2 L2023.7,622.7 L2025.6,623.2 L2027.5,623.7 L2029.5,624.2 L2031.4,624.7 L2033.3,625.2 L2035.3,625.7 L2037.2,626.2 L2039.2,626.7 L2041.1,627.1 L2043.0,627.6 L2045.0,628.1 L2046.9,628.6 L2048.9,629.0 L2050.8,629.5 L2052.7,629.9 L2054.7,630.4 L2056.6,630.8 L2058.6,631.3 L2060.5,631.7 L2062.5,632.1 L2064.4,632.6 L2066.4,633.0 L2068.3,633.4 L2070.3,633.8 L2072.3,634.2 L2074.2,634.6 L2076.2,635.0 L2078.1,635.4 L2080.1,635.8 L2082.0,636.2 L2084.0,636.6 L2086.0,636.9 L2087.9,637.3 L2089.9,637.7 L2091.9,638.0 L2093.8,638.4 L2095.8,638.7 L2097.8,639.1 L2099.7,639.4 L2101.7,639.7 L2103.7,640.0 L2105.6,640.3 L2107.6,640.7 L2109.6,641.0 L2111.6,641.3 L2113.5,641.5 L2115.5,641.8 L2117.5,642.1 L2119.5,642.4 L2121.4,642.7 L2123.4,642.9 L2125.4,643.2 L2127.4,643.4 L2129.4,643.7 L2131.4,643.9 L2133.3,644.2 L2135.3,644.4 L2137.3,644.6 L2139.3,644.9 L2141.3,645.1 L2143.3,645.3 L2145.2,645.5 L2147.2,645.7 L2149.2,646.0 L2151.2,646.2 L2153.2,646.4 L2155.2,646.6 L2157.2,646.8 L2159.2,646.9 L2161.2,647.1 L2163.1,647.3 L2165.1,647.5 L2167.1,647.7 L2169.1,647.9 L2171.1,648.0 L2173.1,648.2 L2175.1,648.4 L2177.1,648.6 L2179.1,648.7 L2181.1,648.9 L2183.1,649.1 L2185.0,649.2 L2187.0,649.4 L2189.0,649.5 L2191.0,649.7 L2193.0,649.8 L2195.0,650.0 L2197.0,650.1 L2199.0,650.3 L2201.0,650.4 L2203.0,650.6 L2205.0,650.7 L2207.0,650.9 L2209.0,651.0 L2211.0,651.1 L2213.0,651.3 L2214.9,651.4 L2216.9,651.5 L2218.9,651.6 L2220.9,651.8 L2222.9,651.9 L2224.9,652.0 L2226.9,652.1 L2228.9,652.2 L2230.9,652.3 L2232.9,652.4 L2234.9,652.5 L2236.9,652.6 L2238.9,652.8 L2240.9,652.9 L2242.9,652.9 L2244.9,653.0 L2246.9,653.1 L2248.9,653.2 L2250.9,653.3 L2252.9,653.4 L2254.9,653.5 L2256.8,653.6 L2258.8,653.6 L2260.8,653.7 L2262.8,653.8 L2264.8,653.9 L2266.8,653.9 L2268.8,654.0 L2270.8,654.1 L2272.8,654.1 L2274.8,654.2 L2276.8,654.3 L2278.8,654.3 L2280.8,654.4 L2282.8,654.4 L2284.8,654.5 L2286.8,654.5 L2288.8,654.6 L2290.8,654.6 L2292.8,654.7 L2294.8,654.7 L2296.8,654.7 L2298.8,654.8 L2300.8,654.8 L2302.8,654.9 L2304.8,654.9 L2306.8,654.9 L2308.8,655.0 L2310.8,655.0 L2312.8,655.0 L2314.8,655.1 L2316.8,655.1 L2318.8,655.1 L2320.8,655.1 L2322.8,655.2 L2324.8,655.2 L2326.7,655.2 L2328.7,655.2 L2330.7,655.3 L2332.7,655.3 L2334.7,655.3 L2336.7,655.3 L2338.7,655.3 L2340.7,655.4 L2342.7,655.4 L2344.7,655.4 L2346.7,655.4 L2348.7,655.4 L2350.7,655.5 L2352.7,655.5 L2354.7,655.5 L2356.7,655.5 L2358.7,655.5 L2360.7,655.5 L2362.7,655.6 L2364.7,655.6 L2366.7,655.6 L2368.7,655.6 L2370.7,655.6 L2372.7,655.6 L2374.7,655.7 L2376.7,655.7 L2378.7,655.7 L2380.7,655.7 L2382.7,655.7 L2384.7,655.7 L2386.7,655.7 L2388.7,655.8 L2390.7,655.8 L2392.7,655.8 L2394.7,655.8 L2396.7,655.8 L2398.7,655.8 L2400.7,655.8 L2402.7,655.8 L2404.7,655.9 L2406.7,655.9 L2408.7,655.9 L2410.7,655.9 L2412.7,655.9 L2414.7,655.9 L2416.7,655.9 L2418.6,655.9 L2420.6,655.9 L2422.6,656.0 L2424.6,656.0 L2426.6,656.0 L2428.6,656.0 L2430.6,656.0 L2432.6,656.0 L2434.6,656.0 L2436.6,656.0 L2438.6,656.0 L2440.6,656.0 L2442.6,656.0 L2444.6,656.0 L2446.6,656.1 L2448.6,656.1 L2450.6,656.1 L2452.6,656.1 L2454.6,656.1 L2456.6,656.1 L2458.6,656.1 L2460.6,656.1 L2462.6,656.1 L2464.6,656.1 L2466.6,656.1 L2468.6,656.1 L2470.6,656.1 L2472.6,656.1 L2474.6,656.1 L2476.6,656.1 L2478.6,656.1 L2480.6,656.2 L2482.6,656.2 L2484.6,656.2 L2486.6,656.2 L2488.6,656.2 L2490.6,656.2 L2492.6,656.2 L2494.6,656.2 L2496.6,656.2 L2498.6,656.2 L2500.6,656.2 L2502.6,656.2 L2504.6,656.2 L2506.6,656.2 L2508.5,656.2 L2510.5,656.2 L2512.5,656.2 L2514.5,656.2 L2516.5,656.2 L2518.5,656.2 L2520.5,656.2 L2522.5,656.2 L2524.5,656.2 L2526.5,656.2 L2528.5,656.2 L2530.5,656.2 L2532.5,656.2 L2534.5,656.2 L2536.5,656.2 L2538.5,656.2 L2540.5,656.2 L2542.5,656.2 L2544.5,656.2 L2546.5,656.2 L2548.5,656.2 L2550.5,656.2 L2552.5,656.2 L2554.5,656.2 L2556.5,656.2 L2558.5,656.2 L2560.5,656.2 L2562.5,656.2 L2564.5,656.2 L2566.5,656.2 L2568.5,656.2 L2570.5,656.2 L2572.5,656.2 L2574.5,656.2 L2576.5,656.2 L2578.5,656.2 L2580.5,656.2 L2582.5,656.2 L2584.5,656.2 L2586.5,656.2 L2588.5,656.2 L2590.5,656.2 L2592.5,656.2 L2594.5,656.2 L2596.5,656.2 L2598.5,656.2 L2600.4,656.2 L2602.4,656.2 L2604.4,656.2 L2606.4,656.1 L2608.4,656.1 L2610.4,656.1 L2612.4,656.1 L2614.4,656.1 L2616.4,656.1 L2618.4,656.1 L2620.4,656.1 L2622.4,656.1 L2624.4,656.1 L2626.4,656.1 L2628.4,656.1 L2630.4,656.1 L2632.4,656.1 L2634.4,656.1 L2636.4,656.1 L2638.4,656.1 L2640.4,656.1 L2642.4,656.1 L2644.4,656.1 L2646.4,656.1 L2648.4,656.1 L2650.4,656.1 L2652.4,656.1 L2654.4,656.1 L2656.4,656.1 L2658.4,656.1 L2660.4,656.1 L2662.4,656.1 L2664.4,656.1 L2666.4,656.1 L2668.4,656.1 L2670.4,656.0 L2672.4,656.0 L2674.4,656.0 L2676.4,656.0 L2678.4,656.0 L2680.4,656.0 L2682.4,656.0 L2684.4,656.0 L2686.4,656.0 L2688.4,656.0 L2690.3,656.0 L2692.3,656.0 L2694.3,656.0 L2696.3,656.0 L2698.3,656.0 L2700.3,656.0 L2702.3,656.0 L2704.3,656.0 L2706.3,656.0 L2708.3,656.0 L2710.3,656.0 L2712.3,656.0 L2714.3,656.0 L2716.3,656.0 L2718.3,656.0 L2720.3,656.0 L2722.3,656.0 L2724.3,656.0 L2726.3,656.0 L2728.3,656.0 L2730.3,656.0 L2732.3,656.0 L2734.3,656.0 L2736.3,656.0 L2738.3,656.0 L2740.3,656.0 L2742.3,656.0 L2744.3,656.0 L2746.3,656.0 L2748.3,656.0 L2750.3,656.0 L2752.3,655.9 L2754.3,655.9 L2756.3,655.9 L2758.3,655.9 L2760.3,655.9 L2762.3,655.9 L2764.3,655.9 L2766.3,655.9 L2768.3,655.9 L2770.3,655.9 L2772.3,655.9 L2774.3,655.9 L2776.3,655.9 L2778.3,655.9 L2780.3,655.9 L2782.2,655.9 L2784.2,655.9 L2786.2,655.9 L2788.2,655.9 L2790.2,655.9 L2792.2,655.9 L2794.2,655.9 L2796.2,655.9 L2798.2,655.9 L2800.2,655.9 L2802.2,655.9 L2804.2,655.9 L2806.2,655.9 L2808.2,655.9 L2810.2,655.9 L2812.2,655.9 L2814.2,655.9 L2816.2,655.9 L2818.2,655.9 L2820.2,655.9 L2822.2,655.9 L2824.2,655.9 L2826.2,655.9 L2828.2,655.9 L2830.2,655.9 L2832.2,655.9 L2834.2,655.9 L2836.2,655.9 L2838.2,655.9 L2840.2,655.9 L2842.2,655.9 L2844.2,655.9 L2846.2,655.9 L2848.2,655.9 L2850.2,655.9 L2852.2,655.9 L2854.2,655.9 L2856.2,655.9 L2858.2,655.9 L2860.2,655.9 L2862.2,655.9 L2864.2,655.9 L2866.2,655.9 L2868.2,655.9 L2870.2,655.9 L2872.1,655.9 L2874.1,655.9 L2876.1,655.9 L2878.1,655.9 L2880.1,655.9 L2882.1,655.9 L2884.1,655.9 L2886.1,655.9 L2888.1,655.9 L2890.1,655.9 L2892.1,655.9 L2894.1,655.9 L2896.1,655.9 L2898.1,655.9 L2900.1,655.9 L2902.1,655.9 L2904.1,655.9 L2906.1,655.9 L2908.1,655.9 L2910.1,655.9 L2912.1,655.9 L2914.1,655.9 L2916.1,655.9 L2918.1,655.9 L2920.1,655.9 L2922.1,655.9 L2924.1,655.9 L2926.1,656.0 L2928.1,656.0 L2930.1,656.0 L2932.1,656.0 L2934.1,656.0 L2936.1,656.0 L2938.1,656.0 L2940.1,656.0 L2942.1,656.0 L2944.1,656.0 L2946.1,656.0 L2948.1,656.0 L2950.1,656.0 L2952.1,656.0 L2954.1,656.0 L2956.1,656.0 L2958.1,656.0 L2960.1,656.0 L2962.1,656.0 L2964.0,656.0 L2966.0,656.0 L2968.0,656.0 L2970.0,656.0 L2972.0,656.0 L2974.0,656.0 L2976.0,656.0 L2978.0,656.0 L2980.0,656.0 L2982.0,656.0 L2984.0,656.0 L2986.0,656.0 L2988.0,656.0 L2990.0,656.0 L2992.0,656.0 L2994.0,656.0 L2996.0,656.0 L2998.0,656.0 L3000.0,656.0 L3002.0,656.0 L3004.0,656.0 L3006.0,656.0 L3008.0,656.0" fill="none" stroke="#9ccbe4" stroke-width="4.8"/>
<path d="M1669.7,1020.5 L1671.0,1018.9 L1672.2,1017.4 L1673.5,1015.8 L1674.7,1014.3 L1676.0,1012.7 L1677.2,1011.2 L1678.5,1009.6 L1679.8,1008.0 L1681.0,1006.5 L1682.3,1004.9 L1683.5,1003.4 L1684.8,1001.8 L1686.0,1000.3 L1687.3,998.7 L1688.5,997.1 L1689.8,995.6 L1691.0,994.0 L1692.3,992.5 L1693.5,990.9 L1694.8,989.3 L1696.0,987.8 L1697.3,986.2 L1698.5,984.7 L1699.7,983.1 L1701.0,981.5 L1702.2,980.0 L1703.5,978.4 L1704.7,976.8 L1706.0,975.3 L1707.2,973.7 L1708.5,972.2 L1709.7,970.6 L1710.9,969.0 L1712.2,967.5 L1713.4,965.9 L1714.7,964.3 L1715.9,962.8 L1717.1,961.2 L1718.4,959.6 L1719.6,958.1 L1720.9,956.5 L1722.1,954.9 L1723.4,953.4 L1724.6,951.8 L1725.9,950.3 L1727.1,948.7 L1728.4,947.1 L1729.6,945.6 L1730.9,944.0 L1732.1,942.5 L1733.4,940.9 L1734.6,939.4 L1735.9,937.8 L1737.2,936.3 L1738.4,934.7 L1739.7,933.2 L1741.0,931.6 L1742.2,930.1 L1743.5,928.5 L1744.8,927.0 L1746.0,925.5 L1747.3,923.9 L1748.6,922.4 L1749.9,920.9 L1751.1,919.3 L1752.4,917.8 L1753.7,916.3 L1755.0,914.7 L1756.3,913.2 L1757.6,911.7 L1758.9,910.2 L1760.2,908.7 L1761.5,907.1 L1762.8,905.6 L1764.1,904.1 L1765.4,902.6 L1766.7,901.1 L1768.0,899.6 L1769.3,898.1 L1770.6,896.6 L1772.0,895.1 L1773.3,893.6 L1774.6,892.1 L1775.9,890.6 L1777.3,889.1 L1778.6,887.7 L1780.0,886.2 L1781.3,884.7 L1782.7,883.3 L1784.0,881.8 L1785.4,880.3 L1786.7,878.9 L1788.1,877.4 L1789.5,876.0 L1790.9,874.5 L1792.3,873.1 L1793.6,871.6 L1795.0,870.2 L1796.4,868.8 L1797.8,867.4 L1799.2,865.9 L1800.6,864.5 L1802.0,863.1 L1803.4,861.7 L1804.8,860.3 L1806.3,858.8 L1807.7,857.4 L1809.1,856.0 L1810.5,854.6 L1812.0,853.2 L1813.4,851.8 L1814.8,850.5 L1816.3,849.1 L1817.7,847.7 L1819.2,846.3 L1820.6,844.9 L1822.1,843.5 L1823.5,842.2 L1825.0,840.8 L1826.4,839.4 L1827.9,838.1 L1829.4,836.7 L1830.8,835.3 L1832.3,834.0 L1833.8,832.6 L1835.2,831.3 L1836.7,829.9 L1838.2,828.6 L1839.7,827.2 L1841.2,825.9 L1842.7,824.6 L1844.2,823.2 L1845.7,821.9 L1847.1,820.6 L1848.7,819.3 L1850.2,817.9 L1851.7,816.6 L1853.2,815.3 L1854.7,814.0 L1856.2,812.7 L1857.7,811.4 L1859.3,810.1 L1860.8,808.9 L1862.3,807.6 L1863.9,806.3 L1865.4,805.0 L1867.0,803.8 L1868.5,802.5 L1870.1,801.3 L1871.7,800.0 L1873.2,798.8 L1874.8,797.6 L1876.4,796.4 L1878.0,795.1 L1879.6,793.9 L1881.2,792.7 L1882.8,791.6 L1884.4,790.4 L1886.0,789.2 L1887.6,788.1 L1889.3,786.9 L1890.9,785.8 L1892.6,784.6 L1894.2,783.5 L1895.9,782.4 L1897.5,781.3 L1899.2,780.2 L1900.9,779.1 L1902.6,778.1 L1904.3,777.0 L1906.0,776.0 L1907.7,774.9 L1909.4,773.9 L1911.1,772.9 L1912.8,771.9 L1914.6,770.9 L1916.3,770.0 L1918.0,769.0 L1919.8,768.1 L1921.6,767.1 L1923.3,766.2 L1925.1,765.3 L1926.9,764.4 L1928.7,763.5 L1930.5,762.7 L1932.3,761.8 L1934.1,761.0 L1935.9,760.2 L1937.7,759.4 L1939.5,758.6 L1941.4,757.9 L1943.2,757.1 L1945.1,756.4 L1946.9,755.7 L1948.8,755.0 L1950.7,754.3 L1952.5,753.6 L1954.4,753.0 L1956.3,752.3 L1958.2,751.7 L1960.1,751.1 L1962.0,750.5 L1963.9,750.0 L1965.8,749.4 L1967.7,748.9 L1969.7,748.4 L1971.6,747.8 L1973.5,747.4 L1975.4,746.9 L1977.4,746.4 L1979.3,746.0 L1981.3,745.6 L1983.2,745.1 L1985.1,744.8 L1987.1,744.4 L1989.1,744.0 L1991.0,743.7 L1993.0,743.4 L1994.9,743.1 L1996.9,742.8 L1998.9,742.5 L2000.8,742.3 L2002.8,742.0 L2004.8,741.8 L2006.7,741.7 L2008.7,741.5 L2010.7,741.3 L2012.6,741.2 L2014.6,741.1 L2016.6,741.1 L2018.6,741.0 L2020.6,741.0 L2022.5,740.9 L2024.5,741.0 L2026.5,741.0 L2028.5,741.0 L2030.4,741.1 L2032.4,741.2 L2034.4,741.3 L2036.4,741.4 L2038.4,741.6 L2040.3,741.7 L2042.3,741.9 L2044.3,742.1 L2046.2,742.3 L2048.2,742.6 L2050.2,742.9 L2052.1,743.1 L2054.1,743.4 L2056.1,743.7 L2058.0,744.1 L2060.0,744.4 L2061.9,744.8 L2063.9,745.2 L2065.8,745.6 L2067.8,746.0 L2069.7,746.4 L2071.6,746.9 L2073.6,747.3 L2075.5,747.8 L2077.4,748.3 L2079.4,748.8 L2081.3,749.3 L2083.2,749.9 L2085.1,750.4 L2087.0,751.0 L2088.9,751.6 L2090.8,752.2 L2092.7,752.8 L2094.6,753.4 L2096.5,754.1 L2098.4,754.7 L2100.3,755.4 L2102.2,756.1 L2104.0,756.8 L2105.9,757.5 L2107.8,758.2 L2109.6,758.9 L2111.5,759.7 L2113.3,760.4 L2115.2,761.2 L2117.0,762.0 L2118.8,762.8 L2120.7,763.6 L2122.5,764.4 L2124.3,765.2 L2126.1,766.1 L2128.0,766.9 L2129.8,767.7 L2131.6,768.6 L2133.4,769.5 L2135.2,770.4 L2137.0,771.2 L2138.8,772.1 L2140.6,773.1 L2142.3,774.0 L2144.1,774.9 L2145.9,775.8 L2147.7,776.8 L2149.4,777.7 L2151.2,778.7 L2153.0,779.6 L2154.7,780.6 L2156.5,781.5 L2158.3,782.5 L2160.0,783.5 L2161.8,784.5 L2163.5,785.5 L2165.2,786.5 L2167.0,787.5 L2168.7,788.5 L2170.5,789.5 L2172.2,790.5 L2173.9,791.5 L2175.7,792.6 L2177.4,793.6 L2179.1,794.6 L2180.8,795.7 L2182.5,796.7 L2184.3,797.8 L2186.0,798.8 L2187.7,799.8 L2189.4,800.9 L2191.1,802.0 L2192.8,803.0 L2194.5,804.1 L2196.2,805.1 L2197.9,806.2 L2199.6,807.3 L2201.3,808.3 L2203.0,809.4 L2204.7,810.5 L2206.4,811.6 L2208.0,812.7 L2209.7,813.7 L2211.4,814.8 L2213.1,815.9 L2214.8,817.0 L2216.5,818.1 L2218.1,819.2 L2219.8,820.3 L2221.5,821.4 L2223.2,822.5 L2224.8,823.6 L2226.5,824.7 L2228.2,825.8 L2229.9,826.9 L2231.5,828.0 L2233.2,829.1 L2234.9,830.2 L2236.5,831.3 L2238.2,832.5 L2239.9,833.6 L2241.5,834.7 L2243.2,835.8 L2244.8,836.9 L2246.5,838.0 L2248.2,839.1 L2249.8,840.3 L2251.5,841.4 L2253.1,842.5 L2254.8,843.6 L2256.5,844.7 L2258.1,845.8 L2259.8,847.0 L2261.4,848.1 L2263.1,849.2 L2264.7,850.3 L2266.4,851.4 L2268.1,852.6 L2269.7,853.7 L2271.4,854.8 L2273.0,855.9 L2274.7,857.0 L2276.3,858.2 L2278.0,859.3 L2279.7,860.4 L2281.3,861.5 L2283.0,862.6 L2284.6,863.8 L2286.3,864.9 L2287.9,866.0 L2289.6,867.1 L2291.2,868.2 L2292.9,869.4 L2294.5,870.5 L2296.2,871.6 L2297.8,872.7 L2299.5,873.8 L2301.1,875.0 L2302.8,876.1 L2304.4,877.2 L2306.1,878.3 L2307.7,879.5 L2309.4,880.6 L2311.0,881.7 L2312.7,882.9 L2314.3,884.0 L2316.0,885.1 L2317.6,886.2 L2319.2,887.4 L2320.9,888.5 L2322.5,889.6 L2324.2,890.8 L2325.8,891.9 L2327.4,893.1 L2329.1,894.2 L2330.7,895.4 L2332.3,896.5 L2333.9,897.7 L2335.6,898.8 L2337.2,900.0 L2338.8,901.1 L2340.4,902.3 L2342.1,903.5 L2343.7,904.6 L2345.3,905.8 L2346.9,907.0 L2348.5,908.1 L2350.1,909.3 L2351.8,910.5 L2353.4,911.6 L2355.0,912.8 L2356.6,914.0 L2358.2,915.2 L2359.8,916.3 L2361.5,917.5 L2363.1,918.7 L2364.7,919.8 L2366.3,921.0 L2367.9,922.2 L2369.5,923.4 L2371.2,924.5 L2372.8,925.7 L2374.4,926.9 L2376.0,928.0 L2377.6,929.2 L2379.3,930.3 L2380.9,931.5 L2382.5,932.7 L2384.1,933.8 L2385.8,935.0 L2387.4,936.2 L2389.0,937.3 L2390.6,938.5 L2392.3,939.6 L2393.9,940.8 L2395.5,941.9 L2397.2,943.1 L2398.8,944.2 L2400.4,945.4 L2402.0,946.5 L2403.7,947.7 L2405.3,948.8 L2406.9,950.0 L2408.6,951.1 L2410.2,952.3 L2411.9,953.4 L2413.5,954.6 L2415.1,955.7 L2416.8,956.8 L2418.4,958.0 L2420.0,959.1 L2421.7,960.3 L2423.3,961.4 L2425.0,962.5 L2426.6,963.7 L2428.3,964.8 L2429.9,965.9 L2431.5,967.1 L2433.2,968.2 L2434.8,969.3 L2436.5,970.5 L2438.1,971.6 L2439.8,972.7 L2441.4,973.9 L2443.1,975.0 L2444.7,976.1 L2446.4,977.2 L2448.0,978.4 L2449.6,979.5 L2451.3,980.6 L2452.9,981.8 L2454.6,982.9 L2456.2,984.1 L2457.8,985.2 L2459.5,986.4 L2461.1,987.5 L2462.7,988.6 L2464.4,989.8 L2466.0,990.9 L2467.6,992.1 L2469.3,993.3 L2470.9,994.4 L2472.5,995.6 L2474.1,996.7 L2475.8,997.9 L2477.4,999.1 L2479.0,1000.2 L2480.6,1001.4 L2482.2,1002.6 L2483.8,1003.7 L2485.5,1004.9 L2487.1,1006.1 L2488.7,1007.3 L2490.3,1008.4 L2491.9,1009.6 L2493.5,1010.8 L2495.1,1012.0 L2496.7,1013.2 L2498.4,1014.3 L2500.0,1015.5 L2501.6,1016.7 L2503.2,1017.9 L2504.8,1019.1 L2506.4,1020.3 L2508.0,1021.5 L2509.6,1022.6 L2511.2,1023.8 L2512.8,1025.0 L2514.4,1026.2 L2516.0,1027.4 L2517.6,1028.6 L2519.2,1029.8 L2520.8,1031.0 L2522.4,1032.2 L2524.0,1033.4 L2525.6,1034.6 L2527.2,1035.8 L2528.8,1037.0 L2530.4,1038.1 L2532.0,1039.3 L2533.6,1040.5 L2535.2,1041.7 L2536.8,1042.9 L2538.4,1044.1 L2540.0,1045.3 L2541.6,1046.6 L2543.2,1047.8 L2544.8,1049.0 L2546.4,1050.2 L2547.9,1051.4 L2549.5,1052.6 L2551.1,1053.8 L2552.7,1055.0 L2554.3,1056.2 L2555.9,1057.5 L2557.4,1058.7 L2559.0,1059.9 L2560.6,1061.1 L2562.2,1062.3 L2563.8,1063.5 L2565.4,1064.8 L2566.9,1066.0 L2568.5,1067.2 L2570.1,1068.4 L2584.0,1076.9 L2594.2,1085.1 L2602.3,1088.1 L2616.6,1100.3 L2628.8,1107.4 L2636.9,1116.6 L2651.1,1127.8 L2659.3,1128.4 L2673.5,1143.0 L2679.6,1150.1 L2687.7,1150.1 L2693.8,1160.3 L2703.0,1160.3 L2709.1,1172.1 L2724.3,1172.1 L2730.4,1187.7 L2753.8,1187.7 L2759.9,1209.7 L2804.4,1209.8 L2810.5,1247.7 L3008.0,1247.7" fill="none" stroke="#fdb863" stroke-width="4.8" stroke-linejoin="round"/>
<path d="M1713.4,1246.9 L1721.2,1246.9 L1726.4,1210.1 L1735.9,1210.1 L1743.0,1187.6 L1752.5,1166.2 L1763.2,1150.8 L1773.9,1128.3 L1785.7,1112.8 L1797.6,1097.4 L1814.2,1074.9 L1830.8,1055.9 L1849.8,1038.1 L1871.2,1012.0 L1878.3,1009.2 L2490.5,1009.2 L2521.0,1019.0 L2549.5,1028.7 L2563.7,1032.2 L2573.9,1036.9 L2602.3,1045.4 L2622.7,1054.1 L2630.8,1055.6 L2638.9,1059.2 L2645.0,1060.7 L2653.2,1064.7 L2663.3,1067.2 L2673.5,1072.9 L2704.0,1082.0 L2724.3,1090.1 L2744.7,1100.3 L2752.8,1100.3 L2766.0,1108.0 L2775.2,1108.0 L2782.3,1112.1 L2790.8,1112.2 L2803.0,1122.4 L2812.5,1122.6 L2818.0,1127.8 L2834.2,1127.8 L2839.6,1134.6 L2849.1,1134.6 L2854.6,1142.0 L2870.8,1142.0 L2876.2,1150.1 L2892.5,1150.1 L2897.9,1160.3 L2921.0,1160.3 L2926.4,1172.5 L2965.7,1172.5 L2970.5,1188.1 L3007.7,1188.1" fill="none" stroke="#ff0000" stroke-width="4.8" stroke-linejoin="round"/>
<path d="M1880.5,1133.0 L1880.7,1131.0 L1880.9,1129.0 L1881.1,1127.0 L1881.3,1125.0 L1881.5,1123.1 L1881.7,1121.1 L1881.9,1119.1 L1882.1,1117.1 L1882.3,1115.1 L1882.6,1113.1 L1882.8,1111.1 L1883.0,1109.1 L1883.2,1107.2 L1883.5,1105.2 L1883.7,1103.2 L1884.0,1101.2 L1884.2,1099.2 L1884.5,1097.2 L1884.7,1095.3 L1885.0,1093.3 L1885.3,1091.3 L1885.6,1089.3 L1885.9,1087.4 L1886.3,1085.4 L1886.6,1083.4 L1887.0,1081.5 L1887.3,1079.5 L1887.7,1077.5 L1888.1,1075.6 L1888.6,1073.6 L1889.0,1071.7 L1889.5,1069.8 L1890.0,1067.8 L1890.5,1065.9 L1891.0,1064.0 L1891.6,1062.1 L1892.2,1060.2 L1892.8,1058.3 L1893.4,1056.4 L1894.0,1054.5 L1894.7,1052.6 L1895.4,1050.7 L1896.1,1048.9 L1896.8,1047.0 L1897.6,1045.1 L1898.3,1043.3 L1899.1,1041.5 L1899.9,1039.6 L1900.7,1037.8 L1901.5,1036.0 L1902.4,1034.2 L1903.3,1032.4 L1904.1,1030.6 L1905.0,1028.8 L1905.9,1027.0 L1906.9,1025.2 L1907.8,1023.5 L1908.8,1021.7 L1909.8,1020.0 L1910.8,1018.3 L1911.8,1016.5 L1912.9,1014.8 L1913.9,1013.1 L1915.0,1011.5 L1916.1,1009.8 L1917.2,1008.1 L1918.3,1006.5 L1919.5,1004.8 L1920.7,1003.2 L1921.8,1001.6 L1923.0,1000.0 L1924.3,998.5 L1925.5,996.9 L1926.8,995.3 L1928.1,993.8 L1929.4,992.3 L1930.7,990.8 L1932.0,989.3 L1933.4,987.9 L1934.7,986.4 L1936.1,985.0 L1937.5,983.6 L1938.9,982.2 L1940.4,980.8 L1941.8,979.4 L1943.3,978.0 L1944.8,976.7 L1946.3,975.4 L1947.8,974.1 L1949.3,972.8 L1950.8,971.5 L1952.4,970.2 L1953.9,969.0 L1955.5,967.7 L1957.1,966.5 L1958.7,965.3 L1960.3,964.1 L1961.9,962.9 L1963.5,961.7 L1965.1,960.6 L1966.7,959.4 L1968.4,958.3 L1970.0,957.1 L1971.7,956.0 L1973.3,954.9 L1975.0,953.8 L1976.7,952.7 L1978.3,951.6 L1980.0,950.5 L1981.7,949.4 L1983.4,948.4 L1985.1,947.3 L1986.8,946.3 L1988.5,945.2 L1990.2,944.2 L1991.9,943.2 L1993.7,942.1 L1995.4,941.1 L1997.1,940.1 L1998.8,939.1 L2000.6,938.1 L2002.3,937.1 L2004.1,936.1 L2005.8,935.2 L2007.6,934.2 L2009.3,933.3 L2011.1,932.3 L2012.9,931.4 L2014.6,930.5 L2016.4,929.6 L2018.2,928.7 L2020.0,927.9 L2021.8,927.0 L2023.6,926.2 L2025.4,925.3 L2027.2,924.5 L2029.1,923.7 L2030.9,922.9 L2032.8,922.2 L2034.6,921.4 L2036.5,920.7 L2038.3,920.0 L2040.2,919.3 L2042.1,918.6 L2044.0,917.9 L2045.8,917.3 L2047.7,916.6 L2049.6,916.0 L2051.5,915.4 L2053.4,914.8 L2055.4,914.2 L2057.3,913.7 L2059.2,913.1 L2061.1,912.6 L2063.0,912.0 L2065.0,911.5 L2066.9,911.0 L2068.9,910.5 L2070.8,910.1 L2072.7,909.6 L2074.7,909.2 L2076.6,908.8 L2078.6,908.4 L2080.6,908.0 L2082.5,907.7 L2084.5,907.4 L2086.5,907.1 L2088.4,906.8 L2090.4,906.5 L2092.4,906.3 L2094.4,906.1 L2096.4,905.9 L2098.4,905.7 L2100.4,905.6 L2102.3,905.5 L2104.3,905.4 L2106.3,905.3 L2108.3,905.2 L2110.3,905.2 L2112.3,905.2 L2114.3,905.2 L2116.3,905.2 L2118.3,905.2 L2120.3,905.3 L2122.3,905.3 L2124.3,905.4 L2126.3,905.5 L2128.3,905.6 L2130.3,905.7 L2132.3,905.9 L2134.3,906.0 L2136.3,906.2 L2138.2,906.4 L2140.2,906.6 L2142.2,906.8 L2144.2,907.0 L2146.2,907.3 L2148.2,907.6 L2150.2,907.8 L2152.1,908.1 L2154.1,908.4 L2156.1,908.7 L2158.1,909.0 L2160.0,909.4 L2162.0,909.7 L2164.0,910.1 L2166.0,910.4 L2167.9,910.8 L2169.9,911.2 L2171.8,911.6 L2173.8,912.0 L2175.8,912.4 L2177.7,912.9 L2179.7,913.3 L2181.6,913.7 L2183.6,914.2 L2185.5,914.7 L2187.4,915.1 L2189.4,915.6 L2191.3,916.1 L2193.3,916.6 L2195.2,917.1 L2197.1,917.6 L2199.0,918.2 L2201.0,918.7 L2202.9,919.2 L2204.8,919.8 L2206.7,920.4 L2208.6,920.9 L2210.6,921.5 L2212.5,922.1 L2214.4,922.7 L2216.3,923.3 L2218.2,923.9 L2220.1,924.5 L2222.0,925.1 L2223.9,925.7 L2225.8,926.4 L2227.7,927.0 L2229.6,927.7 L2231.5,928.3 L2233.3,929.0 L2235.2,929.6 L2237.1,930.3 L2239.0,931.0 L2240.9,931.7 L2242.7,932.4 L2244.6,933.1 L2246.5,933.8 L2248.3,934.5 L2250.2,935.2 L2252.1,935.9 L2253.9,936.7 L2255.8,937.4 L2257.6,938.2 L2259.5,938.9 L2261.3,939.7 L2263.2,940.4 L2265.0,941.2 L2266.9,942.0 L2268.7,942.8 L2270.5,943.6 L2272.4,944.4 L2274.2,945.2 L2276.0,946.0 L2277.8,946.8 L2279.7,947.6 L2281.5,948.5 L2283.3,949.3 L2285.1,950.1 L2286.9,951.0 L2288.7,951.9 L2290.5,952.7 L2292.3,953.6 L2294.1,954.5 L2295.9,955.4 L2297.6,956.3 L2299.4,957.2 L2301.2,958.1 L2303.0,959.0 L2304.7,960.0 L2306.5,960.9 L2308.3,961.8 L2310.0,962.8 L2311.8,963.7 L2313.5,964.7 L2315.3,965.7 L2317.0,966.7 L2318.7,967.6 L2320.5,968.6 L2322.2,969.6 L2323.9,970.6 L2325.6,971.7 L2327.4,972.7 L2329.1,973.7 L2330.8,974.7 L2332.5,975.8 L2334.2,976.8 L2335.9,977.8 L2337.6,978.9 L2339.3,979.9 L2341.0,981.0 L2342.7,982.1 L2344.4,983.1 L2346.1,984.2 L2347.7,985.3 L2349.4,986.3 L2351.1,987.4 L2352.8,988.5 L2354.5,989.6 L2356.1,990.7 L2357.8,991.8 L2359.5,992.9 L2361.1,994.0 L2362.8,995.1 L2364.5,996.2 L2366.1,997.3 L2367.8,998.4 L2369.4,999.6 L2371.1,1000.7 L2372.7,1001.8 L2374.4,1003.0 L2376.0,1004.1 L2377.6,1005.2 L2379.2,1006.4 L2380.9,1007.6 L2382.5,1008.7 L2384.1,1009.9 L2385.7,1011.1 L2387.3,1012.3 L2388.9,1013.5 L2390.5,1014.7 L2392.1,1015.9 L2393.7,1017.1 L2395.3,1018.3 L2396.8,1019.5 L2398.4,1020.8 L2400.0,1022.0 L2401.5,1023.3 L2403.1,1024.5 L2404.6,1025.8 L2406.2,1027.1 L2407.7,1028.3 L2409.2,1029.6 L2410.8,1030.9 L2412.3,1032.2 L2413.8,1033.5 L2415.3,1034.8 L2416.8,1036.1 L2418.3,1037.5 L2419.8,1038.8 L2421.3,1040.1 L2422.8,1041.5 L2424.3,1042.8 L2425.7,1044.2 L2427.2,1045.6 L2428.6,1046.9 L2430.1,1048.3 L2431.5,1049.7 L2432.9,1051.2 L2434.3,1052.6 L2435.7,1054.0 L2437.1,1055.5 L2438.4,1056.9 L2439.8,1058.4 L2441.1,1059.9 L2442.4,1061.4 L2443.6,1063.0 L2444.9,1064.5 L2446.1,1066.1 L2447.3,1067.6 L2448.5,1069.2 L2449.7,1070.9 L2450.9,1072.5 L2452.0,1074.1 L2453.1,1075.8 L2454.2,1077.5 L2455.2,1079.2 L2456.2,1080.9 L2457.2,1082.6 L2458.2,1084.3 L2459.2,1086.1 L2460.1,1087.8 L2461.0,1089.6 L2461.9,1091.4 L2462.8,1093.2 L2463.6,1095.0 L2464.5,1096.8 L2465.3,1098.7 L2466.0,1100.5 L2466.8,1102.3 L2467.5,1104.2 L2468.3,1106.1 L2469.0,1107.9 L2469.7,1109.8 L2470.3,1111.7 L2471.0,1113.6 L2471.6,1115.5 L2472.2,1117.4 L2472.8,1119.3 L2473.4,1121.2 L2474.0,1123.1 L2474.5,1125.0 L2475.1,1127.0 L2475.6,1128.9 L2476.1,1130.8 L2476.6,1132.8 L2477.1,1134.7 L2477.5,1136.6 L2478.0,1138.6 L2478.4,1140.5 L2478.9,1142.5 L2479.3,1144.4 L2479.7,1146.4 L2480.0,1148.4 L2480.4,1150.3 L2480.8,1152.3 L2481.1,1154.2 L2481.5,1156.2 L2481.8,1158.2 L2482.2,1160.1 L2482.5,1162.1 L2482.8,1164.1 L2483.2,1166.1 L2483.5,1168.0 L2483.8,1170.0 L2484.1,1172.0" fill="none" stroke="#700035" stroke-width="4.8"/>
<path d="M1676.2,1078.8 L1676.6,1076.8 L1676.9,1074.9 L1677.3,1072.9 L1677.7,1071.0 L1678.1,1069.0 L1678.5,1067.0 L1678.9,1065.1 L1679.2,1063.1 L1679.6,1061.1 L1680.0,1059.2 L1680.4,1057.2 L1680.8,1055.3 L1681.2,1053.3 L1681.6,1051.4 L1682.1,1049.4 L1682.5,1047.4 L1682.9,1045.5 L1683.3,1043.5 L1683.8,1041.6 L1684.2,1039.6 L1684.7,1037.7 L1685.1,1035.8 L1685.6,1033.8 L1686.0,1031.9 L1686.5,1029.9 L1687.0,1028.0 L1687.5,1026.1 L1688.0,1024.1 L1688.5,1022.2 L1689.0,1020.3 L1689.6,1018.3 L1690.1,1016.4 L1690.6,1014.5 L1691.2,1012.6 L1691.8,1010.7 L1692.3,1008.8 L1692.9,1006.8 L1693.5,1004.9 L1694.1,1003.0 L1694.7,1001.1 L1695.4,999.2 L1696.0,997.4 L1696.6,995.5 L1697.3,993.6 L1698.0,991.7 L1698.6,989.8 L1699.3,988.0 L1700.0,986.1 L1700.7,984.2 L1701.5,982.4 L1702.2,980.5 L1702.9,978.7 L1703.7,976.8 L1704.5,975.0 L1705.2,973.1 L1706.0,971.3 L1706.8,969.5 L1707.6,967.6 L1708.4,965.8 L1709.3,964.0 L1710.1,962.2 L1710.9,960.4 L1711.8,958.6 L1712.7,956.8 L1713.5,955.0 L1714.4,953.2 L1715.3,951.4 L1716.2,949.6 L1717.1,947.8 L1718.0,946.1 L1719.0,944.3 L1719.9,942.5 L1720.8,940.8 L1721.8,939.0 L1722.7,937.3 L1723.7,935.5 L1724.7,933.8 L1725.6,932.0 L1726.6,930.3 L1727.6,928.5 L1728.6,926.8 L1729.6,925.1 L1730.6,923.4 L1731.6,921.6 L1732.6,919.9 L1733.7,918.2 L1734.7,916.5 L1735.7,914.8 L1736.8,913.1 L1737.8,911.4 L1738.9,909.7 L1740.0,908.0 L1741.1,906.3 L1742.1,904.7 L1743.2,903.0 L1744.3,901.3 L1745.4,899.7 L1746.5,898.0 L1747.7,896.3 L1748.8,894.7 L1749.9,893.0 L1751.0,891.4 L1752.2,889.8 L1753.3,888.1 L1754.5,886.5 L1755.6,884.9 L1756.8,883.2 L1757.9,881.6 L1759.1,880.0 L1760.3,878.4 L1761.5,876.7 L1762.6,875.1 L1763.8,873.5 L1765.0,871.9 L1766.2,870.3 L1767.4,868.7 L1768.6,867.1 L1769.8,865.5 L1771.0,863.9 L1772.2,862.3 L1773.4,860.7 L1774.6,859.1 L1775.8,857.5 L1777.0,855.9 L1778.2,854.3 L1779.4,852.8 L1780.6,851.2 L1781.8,849.6 L1783.1,848.0 L1784.3,846.4 L1785.5,844.8 L1786.7,843.2 L1787.9,841.6 L1789.1,840.0 L1790.3,838.5 L1791.5,836.9 L1792.8,835.3 L1794.0,833.7 L1795.2,832.1 L1796.5,830.6 L1797.7,829.0 L1798.9,827.4 L1800.2,825.9 L1801.4,824.3 L1802.7,822.7 L1803.9,821.2 L1805.2,819.6 L1806.4,818.1 L1807.7,816.6 L1809.0,815.0 L1810.3,813.5 L1811.5,812.0 L1812.8,810.4 L1814.1,808.9 L1815.4,807.4 L1816.7,805.9 L1818.0,804.4 L1819.3,802.9 L1820.6,801.4 L1822.0,799.9 L1823.3,798.4 L1824.6,796.9 L1826.0,795.4 L1827.3,793.9 L1828.7,792.5 L1830.0,791.0 L1831.4,789.5 L1832.7,788.1 L1834.1,786.6 L1835.5,785.2 L1836.8,783.7 L1838.2,782.3 L1839.6,780.8 L1841.0,779.4 L1842.4,778.0 L1843.8,776.5 L1845.1,775.1 L1846.5,773.7 L1847.9,772.2 L1849.3,770.8 L1850.7,769.4 L1852.1,767.9 L1853.5,766.5 L1854.9,765.1 L1856.3,763.7 L1857.7,762.3 L1859.1,760.8 L1860.5,759.4 L1862.0,758.0 L1863.4,756.6 L1864.8,755.2 L1866.2,753.8 L1867.7,752.5 L1869.1,751.1 L1870.5,749.7 L1872.0,748.3 L1873.4,746.9 L1874.9,745.6 L1876.4,744.2 L1877.8,742.9 L1879.3,741.5 L1880.8,740.2 L1882.3,738.9 L1883.8,737.5 L1885.2,736.2 L1886.7,734.9 L1888.2,733.6 L1889.7,732.2 L1891.2,730.9 L1892.8,729.6 L1894.3,728.3 L1895.8,727.0 L1897.3,725.7 L1898.8,724.4 L1900.3,723.1 L1901.9,721.8 L1903.4,720.5 L1904.9,719.3 L1906.5,718.0 L1908.0,716.7 L1909.5,715.4 L1911.1,714.2 L1912.6,712.9 L1914.2,711.6 L1915.7,710.4 L1917.3,709.1 L1918.8,707.8 L1920.4,706.6 L1922.0,705.4 L1923.5,704.1 L1925.1,702.9 L1926.7,701.7 L1928.3,700.4 L1929.9,699.2 L1931.4,698.0 L1933.0,696.8 L1934.6,695.6 L1936.2,694.4 L1937.9,693.2 L1939.5,692.0 L1941.1,690.9 L1942.7,689.7 L1944.3,688.5 L1946.0,687.4 L1947.6,686.2 L1949.2,685.1 L1950.9,683.9 L1952.5,682.8 L1954.2,681.7 L1955.8,680.5 L1957.5,679.4 L1959.1,678.3 L1960.8,677.2 L1962.5,676.1 L1964.2,675.0 L1965.8,674.0 L1967.5,672.9 L1969.2,671.8 L1970.9,670.8 L1972.6,669.7 L1974.3,668.7 L1976.0,667.6 L1977.7,666.6 L1979.4,665.6 L1981.2,664.6 L1982.9,663.6 L1984.6,662.6 L1986.4,661.6 L1988.1,660.6 L1989.8,659.7 L1991.6,658.7 L1993.3,657.7 L1995.1,656.8 L1996.9,655.9 L1998.6,655.0 L2000.4,654.1 L2002.2,653.2 L2004.0,652.3 L2005.8,651.4 L2007.6,650.5 L2009.4,649.7 L2011.2,648.8 L2013.0,648.0 L2014.8,647.2 L2016.6,646.4 L2018.5,645.6 L2020.3,644.8 L2022.1,644.0 L2024.0,643.3 L2025.8,642.5 L2027.7,641.8 L2029.5,641.1 L2031.4,640.3 L2033.3,639.6 L2035.1,638.9 L2037.0,638.2 L2038.9,637.6 L2040.8,636.9 L2042.6,636.2 L2044.5,635.5 L2046.4,634.9 L2048.3,634.2 L2050.2,633.6 L2052.1,633.0 L2054.0,632.3 L2055.9,631.7 L2057.8,631.1 L2059.7,630.5 L2061.6,629.9 L2063.5,629.2 L2065.4,628.6 L2067.3,628.0 L2069.2,627.4 L2071.1,626.8 L2073.0,626.2 L2074.9,625.7 L2076.9,625.1 L2078.8,624.5 L2080.7,624.0 L2082.6,623.4 L2084.5,622.9 L2086.5,622.3 L2088.4,621.8 L2090.3,621.3 L2092.2,620.8 L2094.2,620.3 L2096.1,619.8 L2098.0,619.3 L2100.0,618.9 L2101.9,618.4 L2103.9,618.0 L2105.8,617.6 L2107.7,617.1 L2109.7,616.7 L2111.6,616.4 L2113.6,616.0 L2115.6,615.6 L2117.5,615.3 L2119.5,614.9 L2121.5,614.6 L2123.4,614.3 L2125.4,614.0 L2127.4,613.7 L2129.3,613.4 L2131.3,613.1 L2133.3,612.8 L2135.3,612.6 L2137.2,612.3 L2139.2,612.1 L2141.2,611.8 L2143.2,611.6 L2145.2,611.4 L2147.2,611.2 L2149.1,611.0 L2151.1,610.8 L2153.1,610.6 L2155.1,610.4 L2157.1,610.2 L2159.1,610.0 L2161.1,609.9 L2163.1,609.7 L2165.1,609.5 L2167.1,609.4 L2169.1,609.2 L2171.1,609.1 L2173.0,609.0 L2175.0,608.8 L2177.0,608.7 L2179.0,608.6 L2181.0,608.4 L2183.0,608.3 L2185.0,608.2 L2187.0,608.1 L2189.0,608.0 L2191.0,607.8 L2193.0,607.7 L2195.0,607.6 L2197.0,607.5 L2199.0,607.4 L2201.0,607.3 L2203.0,607.2 L2205.0,607.1 L2207.0,607.0 L2209.0,607.0 L2211.0,606.9 L2213.0,606.8 L2215.0,606.7 L2217.0,606.6 L2219.0,606.5 L2221.0,606.5 L2223.0,606.4 L2225.0,606.3 L2227.0,606.2 L2229.0,606.2 L2231.0,606.1 L2233.0,606.0 L2235.0,606.0 L2237.0,605.9 L2239.0,605.8 L2241.0,605.8 L2242.9,605.7 L2244.9,605.7 L2246.9,605.6 L2248.9,605.5 L2250.9,605.5 L2252.9,605.4 L2254.9,605.4 L2256.9,605.3 L2258.9,605.2 L2260.9,605.2 L2262.9,605.1 L2264.9,605.1 L2266.9,605.0 L2268.9,605.0 L2270.9,604.9 L2272.9,604.8 L2274.9,604.8 L2276.9,604.7 L2278.9,604.7 L2280.9,604.6 L2282.9,604.6 L2284.9,604.5 L2286.9,604.5 L2288.9,604.4 L2290.9,604.4 L2292.9,604.3 L2294.9,604.3 L2296.9,604.2 L2298.9,604.1 L2300.9,604.1 L2302.9,604.0 L2304.9,604.0 L2306.9,603.9 L2308.9,603.9 L2310.9,603.9 L2312.9,603.8 L2314.9,603.8 L2316.9,603.7 L2318.9,603.7 L2320.8,603.6 L2322.8,603.6 L2324.8,603.5 L2326.8,603.5 L2328.8,603.4 L2330.8,603.4 L2332.8,603.4 L2334.8,603.3 L2336.8,603.3 L2338.8,603.3 L2340.8,603.2 L2342.8,603.2 L2344.8,603.1 L2346.8,603.1 L2348.8,603.1 L2350.8,603.0 L2352.8,603.0 L2354.8,603.0 L2356.8,603.0 L2358.8,602.9 L2360.8,602.9 L2362.8,602.9 L2364.8,602.8 L2366.8,602.8 L2368.8,602.8 L2370.8,602.8 L2372.8,602.7 L2374.8,602.7 L2376.8,602.7 L2378.8,602.7 L2380.8,602.7 L2382.8,602.7 L2384.8,602.6 L2386.8,602.6 L2388.8,602.6 L2390.7,602.6 L2392.7,602.6 L2394.7,602.6 L2396.7,602.5 L2398.7,602.5 L2400.7,602.5 L2402.7,602.5 L2404.7,602.5 L2406.7,602.5 L2408.7,602.5 L2410.7,602.5 L2412.7,602.5 L2414.7,602.5 L2416.7,602.4 L2418.7,602.4 L2420.7,602.4 L2422.7,602.4 L2424.7,602.4 L2426.7,602.4 L2428.7,602.4 L2430.7,602.4 L2432.7,602.4 L2434.7,602.4 L2436.7,602.4 L2438.7,602.4 L2440.7,602.4 L2442.7,602.4 L2444.7,602.4 L2446.7,602.4 L2448.7,602.4 L2450.7,602.4 L2452.7,602.4 L2454.7,602.4 L2456.7,602.4 L2458.7,602.4 L2460.7,602.4 L2462.7,602.4 L2464.7,602.4 L2466.7,602.4 L2468.7,602.4 L2470.7,602.4 L2472.7,602.4 L2474.6,602.4 L2476.6,602.4 L2478.6,602.4 L2480.6,602.4 L2482.6,602.4 L2484.6,602.4 L2486.6,602.4 L2488.6,602.4 L2490.6,602.4 L2492.6,602.4 L2494.6,602.4 L2496.6,602.4 L2498.6,602.4 L2500.6,602.4 L2502.6,602.4 L2504.6,602.4 L2506.6,602.4 L2508.6,602.4 L2510.6,602.4 L2512.6,602.5 L2514.6,602.5 L2516.6,602.5 L2518.6,602.5 L2520.6,602.5 L2522.6,602.5 L2524.6,602.5 L2526.6,602.5 L2528.6,602.5 L2530.6,602.5 L2532.6,602.5 L2534.6,602.5 L2536.6,602.5 L2538.6,602.5 L2540.6,602.5 L2542.6,602.5 L2544.6,602.5 L2546.6,602.5 L2548.6,602.6 L2550.6,602.6 L2552.6,602.6 L2554.6,602.6 L2556.5,602.6 L2558.5,602.6 L2560.5,602.6 L2562.5,602.6 L2564.5,602.6 L2566.5,602.6 L2568.5,602.6 L2570.5,602.6 L2572.5,602.6 L2574.5,602.6 L2576.5,602.6 L2578.5,602.7 L2580.5,602.7 L2582.5,602.7 L2584.5,602.7 L2586.5,602.7 L2588.5,602.7 L2590.5,602.7 L2592.5,602.7 L2594.5,602.7 L2596.5,602.7 L2598.5,602.7 L2600.5,602.7 L2602.5,602.7 L2604.5,602.7 L2606.5,602.8 L2608.5,602.8 L2610.5,602.8 L2612.5,602.8 L2614.5,602.8 L2616.5,602.8 L2618.5,602.8 L2620.5,602.8 L2622.5,602.8 L2624.5,602.8 L2626.5,602.8 L2628.5,602.8 L2630.5,602.8 L2632.5,602.8 L2634.5,602.9 L2636.5,602.9 L2638.4,602.9 L2640.4,602.9 L2642.4,602.9 L2644.4,602.9 L2646.4,602.9 L2648.4,602.9 L2650.4,602.9 L2652.4,602.9 L2654.4,602.9 L2656.4,602.9 L2658.4,602.9 L2660.4,602.9 L2662.4,602.9 L2664.4,603.0 L2666.4,603.0 L2668.4,603.0 L2670.4,603.0 L2672.4,603.0 L2674.4,603.0 L2676.4,603.0 L2678.4,603.0 L2680.4,603.0 L2682.4,603.0 L2684.4,603.0 L2686.4,603.0 L2688.4,603.0 L2690.4,603.0 L2692.4,603.0 L2694.4,603.0 L2696.4,603.0 L2698.4,603.0 L2700.4,603.0 L2702.4,603.1 L2704.4,603.1 L2706.4,603.1 L2708.4,603.1 L2710.4,603.1 L2712.4,603.1 L2714.4,603.1 L2716.4,603.1 L2718.4,603.1 L2720.3,603.1 L2722.3,603.1 L2724.3,603.1 L2726.3,603.1 L2728.3,603.1 L2730.3,603.1 L2732.3,603.1 L2734.3,603.1 L2736.3,603.1 L2738.3,603.1 L2740.3,603.1 L2742.3,603.1 L2744.3,603.1 L2746.3,603.1 L2748.3,603.1 L2750.3,603.1 L2752.3,603.1 L2754.3,603.1 L2756.3,603.1 L2758.3,603.1 L2760.3,603.1 L2762.3,603.1 L2764.3,603.1 L2766.3,603.1 L2768.3,603.1 L2770.3,603.1 L2772.3,603.2 L2774.3,603.2 L2776.3,603.2 L2778.3,603.2 L2780.3,603.2 L2782.3,603.2 L2784.3,603.2 L2786.3,603.2 L2788.3,603.2 L2790.3,603.2 L2792.3,603.2 L2794.3,603.2 L2796.3,603.2 L2798.3,603.2 L2800.3,603.2 L2802.2,603.2 L2804.2,603.2 L2806.2,603.2 L2808.2,603.2 L2810.2,603.2 L2812.2,603.2 L2814.2,603.2 L2816.2,603.2 L2818.2,603.2 L2820.2,603.2 L2822.2,603.2 L2824.2,603.2 L2826.2,603.2 L2828.2,603.2 L2830.2,603.2 L2832.2,603.2 L2834.2,603.2 L2836.2,603.2 L2838.2,603.2 L2840.2,603.2 L2842.2,603.2 L2844.2,603.2 L2846.2,603.2 L2848.2,603.2 L2850.2,603.2 L2852.2,603.2 L2854.2,603.2 L2856.2,603.2 L2858.2,603.2 L2860.2,603.2 L2862.2,603.2 L2864.2,603.2 L2866.2,603.2 L2868.2,603.2 L2870.2,603.2 L2872.2,603.2 L2874.2,603.1 L2876.2,603.1 L2878.2,603.1 L2880.2,603.1 L2882.2,603.1 L2884.1,603.1 L2886.1,603.1 L2888.1,603.1 L2890.1,603.1 L2892.1,603.1 L2894.1,603.1 L2896.1,603.1 L2898.1,603.1 L2900.1,603.1 L2902.1,603.1 L2904.1,603.1 L2906.1,603.1 L2908.1,603.1 L2910.1,603.1 L2912.1,603.1 L2914.1,603.1 L2916.1,603.1 L2918.1,603.1 L2920.1,603.1 L2922.1,603.1 L2924.1,603.1 L2926.1,603.1 L2928.1,603.1 L2930.1,603.1 L2932.1,603.1 L2934.1,603.1 L2936.1,603.1 L2938.1,603.1 L2940.1,603.1 L2942.1,603.1 L2944.1,603.1 L2946.1,603.1 L2948.1,603.1 L2950.1,603.1 L2952.1,603.1 L2954.1,603.1 L2956.1,603.1 L2958.1,603.1 L2960.1,603.1 L2962.1,603.1 L2964.1,603.1 L2966.1,603.1 L2968.0,603.1 L2970.0,603.1 L2972.0,603.0 L2974.0,603.0 L2976.0,603.0 L2978.0,603.0 L2980.0,603.0 L2982.0,603.0 L2984.0,603.0 L2986.0,603.0 L2988.0,603.0 L2990.0,603.0 L2992.0,603.0 L2994.0,603.0 L2996.0,603.0 L2998.0,603.0 L3000.0,603.0 L3002.0,603.0 L3004.0,603.0 L3006.0,603.0 L3008.0,603.0" fill="none" stroke="#00a000" stroke-width="4.8"/>
<path d="M1764.4,1246.9 L1778.6,1246.9 L1784.6,1210.1 L1802.3,1210.1 L1808.3,1185.2 L1816.6,1165.0 L1830.8,1149.6 L1843.9,1134.2 L1856.9,1114.0 L1873.5,1097.4 L1873.6,1097.5 L1874.9,1096.0 L1876.2,1094.5 L1877.6,1093.0 L1878.9,1091.5 L1880.3,1090.0 L1881.6,1088.5 L1882.9,1087.1 L1884.3,1085.6 L1885.6,1084.1 L1886.9,1082.6 L1888.3,1081.1 L1889.6,1079.6 L1890.9,1078.1 L1892.3,1076.6 L1893.6,1075.1 L1894.9,1073.7 L1896.3,1072.2 L1897.6,1070.7 L1898.9,1069.2 L1900.2,1067.7 L1901.6,1066.2 L1902.9,1064.7 L1904.2,1063.2 L1905.5,1061.7 L1906.9,1060.2 L1908.2,1058.7 L1909.5,1057.2 L1910.8,1055.7 L1912.1,1054.2 L1913.5,1052.7 L1914.8,1051.2 L1916.1,1049.7 L1917.4,1048.2 L1918.7,1046.7 L1920.0,1045.2 L1921.4,1043.7 L1922.7,1042.2 L1924.0,1040.7 L1925.3,1039.1 L1926.6,1037.6 L1927.9,1036.1 L1929.2,1034.6 L1930.6,1033.1 L1931.9,1031.6 L1933.2,1030.1 L1934.5,1028.6 L1935.8,1027.1 L1937.1,1025.6 L1938.4,1024.1 L1939.8,1022.6 L1941.1,1021.1 L1942.4,1019.5 L1943.7,1018.0 L1945.0,1016.5 L1946.3,1015.0 L1947.7,1013.5 L1949.0,1012.0 L1950.3,1010.5 L1951.6,1009.0 L1953.0,1007.5 L1954.3,1006.0 L1955.6,1004.5 L1957.0,1003.1 L1958.3,1001.6 L1959.6,1000.1 L1961.0,998.6 L1962.3,997.1 L1963.6,995.6 L1965.0,994.1 L1966.3,992.6 L1967.7,991.2 L1969.0,989.7 L1970.4,988.2 L1971.7,986.7 L1973.1,985.2 L1974.4,983.8 L1975.8,982.3 L1977.2,980.8 L1978.5,979.4 L1979.9,977.9 L1981.3,976.5 L1982.7,975.0 L1984.0,973.6 L1985.4,972.1 L1986.8,970.7 L1988.2,969.2 L1989.6,967.8 L1991.0,966.4 L1992.4,965.0 L1993.8,963.5 L1995.2,962.1 L1996.7,960.7 L1998.1,959.3 L1999.5,957.9 L2001.0,956.6 L2002.4,955.2 L2003.9,953.8 L2005.3,952.5 L2006.8,951.1 L2008.3,949.8 L2009.8,948.5 L2011.3,947.1 L2012.8,945.8 L2014.3,944.5 L2015.8,943.3 L2017.3,942.0 L2018.9,940.7 L2020.4,939.5 L2022.0,938.3 L2023.6,937.0 L2025.2,935.8 L2026.8,934.6 L2028.4,933.5 L2030.0,932.3 L2031.6,931.1 L2033.2,930.0 L2034.9,928.9 L2036.5,927.7 L2038.2,926.6 L2039.9,925.5 L2041.5,924.5 L2043.2,923.4 L2044.9,922.3 L2046.6,921.3 L2048.3,920.2 L2050.0,919.2 L2051.7,918.2 L2053.5,917.2 L2055.2,916.2 L2056.9,915.2 L2058.7,914.2 L2060.4,913.3 L2062.2,912.3 L2063.9,911.4 L2065.7,910.4 L2067.5,909.5 L2069.3,908.6 L2071.0,907.7 L2072.8,906.8 L2074.6,905.9 L2076.4,905.1 L2078.2,904.2 L2080.0,903.4 L2081.9,902.5 L2083.7,901.7 L2085.5,900.9 L2087.3,900.1 L2089.2,899.3 L2091.0,898.5 L2092.8,897.7 L2094.7,896.9 L2096.5,896.1 L2098.4,895.4 L2100.2,894.6 L2102.1,893.9 L2104.0,893.2 L2105.8,892.4 L2107.7,891.7 L2109.6,891.0 L2111.4,890.3 L2113.3,889.6 L2115.2,888.9 L2117.1,888.3 L2119.0,887.6 L2120.9,886.9 L2122.8,886.3 L2124.6,885.6 L2126.5,885.0 L2128.4,884.3 L2130.3,883.7 L2132.2,883.1 L2134.1,882.5 L2136.1,881.8 L2138.0,881.2 L2139.9,880.6 L2141.8,880.0 L2143.7,879.4 L2145.6,878.9 L2147.5,878.3 L2149.4,877.7 L2151.4,877.1 L2153.3,876.6 L2155.2,876.0 L2157.1,875.5 L2159.0,874.9 L2161.0,874.4 L2162.9,873.8 L2164.8,873.3 L2166.8,872.8 L2168.7,872.2 L2170.6,871.7 L2172.6,871.2 L2174.5,870.7 L2176.4,870.2 L2178.4,869.7 L2180.3,869.2 L2182.2,868.7 L2184.2,868.2 L2186.1,867.7 L2188.1,867.2 L2190.0,866.7 L2192.0,866.3 L2193.9,865.8 L2195.9,865.3 L2197.8,864.9 L2199.7,864.4 L2201.7,864.0 L2203.7,863.5 L2205.6,863.1 L2207.6,862.7 L2209.5,862.2 L2211.5,861.8 L2213.4,861.4 L2215.4,861.0 L2217.3,860.6 L2219.3,860.2 L2221.3,859.8 L2223.2,859.4 L2225.2,859.0 L2227.1,858.7 L2229.1,858.3 L2231.1,857.9 L2233.0,857.6 L2235.0,857.2 L2237.0,856.9 L2239.0,856.5 L2240.9,856.2 L2242.9,855.9 L2244.9,855.6 L2246.8,855.2 L2248.8,854.9 L2250.8,854.6 L2252.8,854.3 L2254.7,854.0 L2256.7,853.8 L2258.7,853.5 L2260.7,853.2 L2262.7,852.9 L2264.6,852.7 L2266.6,852.4 L2268.6,852.2 L2270.6,852.0 L2272.6,851.7 L2274.6,851.5 L2276.5,851.3 L2278.5,851.1 L2280.5,850.9 L2282.5,850.7 L2284.5,850.5 L2286.5,850.3 L2288.5,850.1 L2290.5,849.9 L2292.4,849.7 L2294.4,849.5 L2296.4,849.4 L2298.4,849.2 L2300.4,849.1 L2302.4,848.9 L2304.4,848.7 L2306.4,848.6 L2308.4,848.5 L2310.4,848.3 L2312.4,848.2 L2314.4,848.0 L2316.4,847.9 L2318.4,847.8 L2320.4,847.7 L2322.4,847.5 L2324.4,847.4 L2326.4,847.3 L2328.4,847.2 L2330.4,847.1 L2332.4,847.0 L2334.3,846.9 L2336.3,846.8 L2338.3,846.6 L2340.3,846.5 L2342.3,846.4 L2344.3,846.3 L2346.3,846.2 L2348.3,846.2 L2350.3,846.1 L2352.3,846.0 L2354.3,845.9 L2356.3,845.8 L2358.3,845.7 L2360.3,845.6 L2362.3,845.5 L2364.3,845.4 L2366.3,845.3 L2368.3,845.2 L2370.3,845.1 L2372.3,845.1 L2374.3,845.0 L2376.3,844.9 L2378.3,844.8 L2380.3,844.7 L2382.3,844.6 L2384.3,844.6 L2386.3,844.5 L2388.3,844.4 L2390.3,844.3 L2392.3,844.3 L2394.3,844.2 L2396.3,844.1 L2398.3,844.0 L2400.3,844.0 L2402.3,843.9 L2404.3,843.8 L2406.3,843.7 L2408.3,843.7 L2410.3,843.6 L2412.3,843.5 L2414.3,843.5 L2416.3,843.4 L2418.3,843.3 L2420.3,843.3 L2422.3,843.2 L2424.3,843.2 L2426.3,843.1 L2428.3,843.0 L2430.3,843.0 L2432.3,842.9 L2434.3,842.9 L2436.3,842.8 L2438.3,842.7 L2440.3,842.7 L2442.3,842.6 L2444.3,842.6 L2446.3,842.5 L2448.3,842.5 L2450.3,842.4 L2452.2,842.4 L2454.2,842.3 L2456.2,842.3 L2458.2,842.3 L2460.2,842.2 L2462.2,842.2 L2464.2,842.1 L2466.2,842.1 L2468.2,842.0 L2470.2,842.0 L2472.2,842.0 L2474.2,841.9 L2476.2,841.9 L2478.2,841.9 L2480.2,841.8 L2482.2,841.8 L2484.2,841.8 L2486.2,841.7 L2488.2,841.7 L2490.2,841.7 L2492.2,841.6 L2494.2,841.6 L2496.2,841.6 L2498.2,841.6 L2500.2,841.5 L2502.2,841.5 L2504.2,841.5 L2506.2,841.5 L2508.2,841.4 L2510.2,841.4 L2512.2,841.4 L2514.2,841.4 L2516.2,841.4 L2518.2,841.3 L2520.2,841.3 L2522.2,841.3 L2524.2,841.3 L2526.2,841.3 L2528.2,841.3 L2530.2,841.2 L2532.2,841.2 L2534.2,841.2 L2536.2,841.2 L2538.2,841.2 L2540.2,841.2 L2542.2,841.2 L2544.2,841.2 L2546.2,841.1 L2548.2,841.1 L2550.2,841.1 L2552.2,841.1 L2554.2,841.1 L2556.2,841.1 L2558.2,841.1 L2560.2,841.1 L2562.2,841.1 L2564.2,841.1 L2566.2,841.1 L2568.2,841.1 L2570.2,841.1 L2572.2,841.1 L2574.2,841.1 L2576.2,841.1 L2578.2,841.1 L2580.2,841.1 L2582.2,841.1 L2584.2,841.1 L2586.2,841.1 L2588.2,841.1 L2590.2,841.1 L2592.2,841.1 L2594.2,841.1 L2596.2,841.1 L2598.2,841.1 L2600.2,841.1 L2602.2,841.1 L2604.2,841.1 L2606.2,841.1 L2608.2,841.1 L2610.2,841.1 L2612.2,841.1 L2614.2,841.1 L2616.2,841.1 L2618.2,841.1 L2620.2,841.1 L2622.2,841.1 L2624.2,841.1 L2626.2,841.1 L2628.2,841.1 L2630.2,841.1 L2632.2,841.1 L2634.2,841.1 L2636.2,841.1 L2638.2,841.2 L2640.2,841.2 L2642.2,841.2 L2644.2,841.2 L2646.2,841.2 L2648.2,841.2 L2650.2,841.2 L2652.2,841.2 L2654.2,841.2 L2656.2,841.2 L2658.2,841.2 L2660.1,841.2 L2662.1,841.2 L2664.1,841.2 L2666.1,841.2 L2668.1,841.2 L2670.1,841.3 L2672.1,841.3 L2674.1,841.3 L2676.1,841.3 L2678.1,841.3 L2680.1,841.3 L2682.1,841.3 L2684.1,841.3 L2686.1,841.3 L2688.1,841.3 L2690.1,841.3 L2692.1,841.3 L2694.1,841.3 L2696.1,841.3 L2698.1,841.3 L2700.1,841.3 L2702.1,841.3 L2704.1,841.3 L2706.1,841.4 L2708.1,841.4 L2710.1,841.4 L2712.1,841.4 L2714.1,841.4 L2716.1,841.4 L2718.1,841.4 L2720.1,841.4 L2722.1,841.4 L2724.1,841.4 L2726.1,841.4 L2728.1,841.4 L2730.1,841.4 L2732.1,841.4 L2734.1,841.4 L2736.1,841.4 L2738.1,841.4 L2740.1,841.4 L2742.1,841.4 L2744.1,841.4 L2746.1,841.4 L2748.1,841.4 L2750.1,841.4 L2752.1,841.4 L2754.1,841.4 L2756.1,841.4 L2758.1,841.4 L2760.1,841.4 L2762.1,841.4 L2764.1,841.4 L2766.1,841.4 L2768.1,841.4 L2770.1,841.4 L2772.1,841.4 L2774.1,841.4 L2776.1,841.4 L2778.1,841.4 L2780.1,841.4 L2782.1,841.4 L2784.1,841.4 L2786.1,841.5 L2788.1,841.5 L2790.1,841.5 L2792.1,841.5 L2794.1,841.5 L2796.1,841.5 L2798.1,841.5 L2800.1,841.5 L2802.1,841.5 L2804.1,841.5 L2806.1,841.5 L2808.1,841.5 L2810.1,841.5 L2812.1,841.5 L2814.1,841.5 L2816.1,841.5 L2818.1,841.5 L2820.1,841.5 L2822.1,841.5 L2824.1,841.4 L2826.1,841.4 L2828.1,841.4 L2830.1,841.4 L2832.1,841.4 L2834.1,841.4 L2836.1,841.4 L2838.1,841.4 L2840.1,841.4 L2842.1,841.4 L2844.1,841.4 L2846.1,841.4 L2848.1,841.4 L2850.1,841.4 L2852.1,841.4 L2854.1,841.4 L2856.1,841.4 L2858.1,841.4 L2860.1,841.4 L2862.1,841.4 L2864.1,841.4 L2866.1,841.4 L2868.1,841.4 L2870.1,841.4 L2872.1,841.4 L2874.1,841.4 L2876.1,841.4 L2878.1,841.4 L2880.1,841.4 L2882.1,841.4 L2884.1,841.4 L2886.1,841.4 L2888.1,841.4 L2890.1,841.4 L2892.1,841.4 L2894.1,841.4 L2896.1,841.4 L2898.1,841.4 L2900.1,841.4 L2902.1,841.4 L2904.1,841.4 L2906.0,841.4 L2908.0,841.4 L2910.0,841.4 L2912.0,841.4 L2914.0,841.4 L2916.0,841.4 L2918.0,841.4 L2920.0,841.4 L2922.0,841.4 L2924.0,841.3 L2926.0,841.3 L2928.0,841.3 L2930.0,841.3 L2932.0,841.3 L2934.0,841.3 L2936.0,841.3 L2938.0,841.3 L2940.0,841.3 L2942.0,841.3 L2944.0,841.3 L2946.0,841.3 L2948.0,841.3 L2950.0,841.3 L2952.0,841.3 L2954.0,841.3 L2956.0,841.3 L2958.0,841.3 L2960.0,841.3 L2962.0,841.3 L2964.0,841.3 L2966.0,841.3 L2968.0,841.3 L2970.0,841.3 L2972.0,841.3 L2974.0,841.3 L2976.0,841.3 L2978.0,841.3 L2980.0,841.3 L2982.0,841.2 L2984.0,841.2 L2986.0,841.2 L2988.0,841.2 L2990.0,841.2 L2992.0,841.2 L2994.0,841.2 L2996.0,841.2 L2998.0,841.2 L3000.0,841.2 L3002.0,841.2 L3004.0,841.2 L3006.0,841.2 L3008.0,841.2" fill="none" stroke="#cbaed8" stroke-width="4.8" stroke-linejoin="round"/>
<line x1="1669.8" y1="584.4" x2="1669.8" y2="1247.8" stroke="#666666" stroke-width="2" />
<line x1="1669.8" y1="1247.8" x2="3008.0" y2="1247.8" stroke="#666666" stroke-width="2" />
<circle cx="1776.9" cy="1172.9" r="7" fill="#cbaed8"/>
<circle cx="1784.3" cy="1172.9" r="7" fill="#cbaed8"/>
<circle cx="1791.5" cy="1172.9" r="7" fill="#cbaed8"/>
<circle cx="1798.7" cy="1172.9" r="7" fill="#cbaed8"/>
<circle cx="1806.2" cy="1172.9" r="7" fill="#cbaed8"/>
<circle cx="1813.4" cy="1160.5" r="7" fill="#cbaed8"/>
<circle cx="1820.6" cy="1160.5" r="7" fill="#cbaed8"/>
<circle cx="1704.2" cy="1093.7" r="7" fill="#a6a6a6"/>
<circle cx="1711.4" cy="1079.5" r="7" fill="#a6a6a6"/>
<circle cx="1718.5" cy="1072.6" r="7" fill="#a6a6a6"/>
<circle cx="1726.1" cy="1064.7" r="7" fill="#a6a6a6"/>
<circle cx="1733.3" cy="1048.5" r="7" fill="#a6a6a6"/>
<circle cx="1740.3" cy="1036.2" r="7" fill="#a6a6a6"/>
<circle cx="1747.5" cy="1009.1" r="7" fill="#a6a6a6"/>
<circle cx="1755.1" cy="991.2" r="7" fill="#a6a6a6"/>
<circle cx="1762.1" cy="987.4" r="7" fill="#a6a6a6"/>
<circle cx="1776.9" cy="977.4" r="7" fill="#a6a6a6"/>
<circle cx="1784.3" cy="969.8" r="7" fill="#a6a6a6"/>
<circle cx="1791.5" cy="965" r="7" fill="#a6a6a6"/>
<circle cx="1798.7" cy="954" r="7" fill="#a6a6a6"/>
<circle cx="1806.2" cy="942.6" r="7" fill="#a6a6a6"/>
<circle cx="1813.4" cy="938.1" r="7" fill="#a6a6a6"/>
<circle cx="1820.6" cy="928" r="7" fill="#a6a6a6"/>
<circle cx="1784.3" cy="1062.8" r="7" fill="#ff9b9b"/>
<circle cx="1791.5" cy="1046.6" r="7" fill="#ff9b9b"/>
<circle cx="1798.7" cy="1047" r="7" fill="#ff9b9b"/>
<circle cx="1806.2" cy="1041" r="7" fill="#ff9b9b"/>
<circle cx="1813.4" cy="1040" r="7" fill="#ff9b9b"/>
<circle cx="1820.6" cy="1034.9" r="7" fill="#ff9b9b"/>
<circle cx="1726.1" cy="1112.7" r="7" fill="#fdb863"/>
<circle cx="1733.3" cy="1093.7" r="7" fill="#fdb863"/>
<circle cx="1740.3" cy="1074.7" r="7" fill="#fdb863"/>
<circle cx="1747.9" cy="1033.9" r="7" fill="#fdb863"/>
<circle cx="1755.1" cy="1015" r="7" fill="#fdb863"/>
<circle cx="1762.1" cy="1016.3" r="7" fill="#fdb863"/>
<circle cx="1776.9" cy="1021.6" r="7" fill="#fdb863"/>
<circle cx="1784.3" cy="1030.5" r="7" fill="#fdb863"/>
<circle cx="1791.5" cy="1022.4" r="7" fill="#fdb863"/>
<circle cx="1798.7" cy="1010.6" r="7" fill="#fdb863"/>
<circle cx="1806.2" cy="993.5" r="7" fill="#fdb863"/>
<circle cx="1813.4" cy="988.2" r="7" fill="#fdb863"/>
<circle cx="1820.6" cy="980.6" r="7" fill="#fdb863"/>
<line x1="1747.8" y1="534.0" x2="1769.8" y2="534.0" stroke="#9ccbe4" stroke-width="2.6" />
<circle cx="1758.8" cy="534.0" r="4.3" fill="#fff" stroke="#9ccbe4" stroke-width="2.6"/>
<text x="1777.4" y="536.5" font-size="22.82" fill="#2f3742" stroke="#2f3742" stroke-width="0.5019718309859155" textLength="121.0" lengthAdjust="spacingAndGlyphs" >Susceptible</text>
<line x1="1915.2" y1="534.0" x2="1937.2" y2="534.0" stroke="#fdb863" stroke-width="2.6" />
<circle cx="1926.2" cy="534.0" r="4.3" fill="#fff" stroke="#fdb863" stroke-width="2.6"/>
<text x="1943.9" y="536.5" font-size="22.82" fill="#2f3742" stroke="#2f3742" stroke-width="0.5019718309859155" textLength="103.3" lengthAdjust="spacingAndGlyphs" >Infectious</text>
<line x1="2063.0" y1="534.0" x2="2085.0" y2="534.0" stroke="#ff0000" stroke-width="2.6" />
<circle cx="2074.0" cy="534.0" r="4.3" fill="#fff" stroke="#ff0000" stroke-width="2.6"/>
<text x="2093.0" y="536.5" font-size="22.82" fill="#2f3742" stroke="#2f3742" stroke-width="0.5019718309859155" textLength="149.7" lengthAdjust="spacingAndGlyphs" >Patients in ICU</text>
<line x1="2260.0" y1="534.0" x2="2282.0" y2="534.0" stroke="#700035" stroke-width="2.6" />
<circle cx="2271.0" cy="534.0" r="4.3" fill="#fff" stroke="#700035" stroke-width="2.6"/>
<text x="2289.6" y="536.5" font-size="22.82" fill="#2f3742" stroke="#2f3742" stroke-width="0.5019718309859155" textLength="132.4" lengthAdjust="spacingAndGlyphs" >ICU overflow</text>
<line x1="2438.0" y1="534.0" x2="2460.0" y2="534.0" stroke="#00a000" stroke-width="2.6" />
<circle cx="2449.0" cy="534.0" r="4.3" fill="#fff" stroke="#00a000" stroke-width="2.6"/>
<text x="2467.6" y="536.5" font-size="22.82" fill="#2f3742" stroke="#2f3742" stroke-width="0.5019718309859155" textLength="108.2" lengthAdjust="spacingAndGlyphs" >Recovered</text>
<line x1="2592.6" y1="534.0" x2="2614.6" y2="534.0" stroke="#cbaed8" stroke-width="2.6" />
<circle cx="2603.6" cy="534.0" r="4.3" fill="#fff" stroke="#cbaed8" stroke-width="2.6"/>
<text x="2622.2" y="536.5" font-size="22.82" fill="#2f3742" stroke="#2f3742" stroke-width="0.5019718309859155" textLength="195.3" lengthAdjust="spacingAndGlyphs" >Cumulative deaths</text>
<circle cx="1662.2" cy="571.7" r="11" fill="#cbaed8"/>
<text x="1679.6" y="574.7" font-size="22.82" fill="#2f3742" stroke="#2f3742" stroke-width="0.5019718309859155" textLength="308.9" lengthAdjust="spacingAndGlyphs" >Cumulative confirmed deaths</text>
<circle cx="2015.7" cy="571.7" r="11" fill="#a6a6a6"/>
<text x="2034.4" y="574.7" font-size="22.82" fill="#2f3742" stroke="#2f3742" stroke-width="0.5019718309859155" textLength="294.6" lengthAdjust="spacingAndGlyphs" >Cumulative confirmed cases</text>
<circle cx="2357" cy="571.7" r="11" fill="#ff9b9b"/>
<text x="2375.3" y="574.7" font-size="22.82" fill="#2f3742" stroke="#2f3742" stroke-width="0.5019718309859155" textLength="199.0" lengthAdjust="spacingAndGlyphs" >Patients in hospital</text>
<circle cx="2601.7" cy="571.7" r="11" fill="#fdb863"/>
<text x="2620.6" y="574.7" font-size="22.82" fill="#2f3742" stroke="#2f3742" stroke-width="0.5019718309859155" textLength="294.4" lengthAdjust="spacingAndGlyphs" >Confirmed cases past 3 days</text>
<text x="1551.8" y="1348.8" font-size="28.87" fill="#2f3742" stroke="#2f3742" stroke-width="0.6352112676056338" textLength="396.7" lengthAdjust="spacingAndGlyphs" >Distribution across age groups</text>
<line x1="1668.8" y1="1640.7" x2="3007.8" y2="1640.7" stroke="#cfcfcf" stroke-width="2" stroke-dasharray="6,5"/>
<line x1="1668.8" y1="1570.5" x2="3007.8" y2="1570.5" stroke="#cfcfcf" stroke-width="2" stroke-dasharray="6,5"/>
<line x1="1668.8" y1="1500.3" x2="3007.8" y2="1500.3" stroke="#cfcfcf" stroke-width="2" stroke-dasharray="6,5"/>
<line x1="1668.8" y1="1430.1" x2="3007.8" y2="1430.1" stroke="#cfcfcf" stroke-width="2" stroke-dasharray="6,5"/>
<line x1="1743.4" y1="1430.1" x2="1743.4" y2="1710.9" stroke="#cfcfcf" stroke-width="2" stroke-dasharray="6,5"/>
<line x1="1892.2" y1="1430.1" x2="1892.2" y2="1710.9" stroke="#cfcfcf" stroke-width="2" stroke-dasharray="6,5"/>
<line x1="2041.0" y1="1430.1" x2="2041.0" y2="1710.9" stroke="#cfcfcf" stroke-width="2" stroke-dasharray="6,5"/>
<line x1="2189.8" y1="1430.1" x2="2189.8" y2="1710.9" stroke="#cfcfcf" stroke-width="2" stroke-dasharray="6,5"/>
<line x1="2338.6" y1="1430.1" x2="2338.6" y2="1710.9" stroke="#cfcfcf" stroke-width="2" stroke-dasharray="6,5"/>
<line x1="2487.4" y1="1430.1" x2="2487.4" y2="1710.9" stroke="#cfcfcf" stroke-width="2" stroke-dasharray="6,5"/>
<line x1="2636.2" y1="1430.1" x2="2636.2" y2="1710.9" stroke="#cfcfcf" stroke-width="2" stroke-dasharray="6,5"/>
<line x1="2785.0" y1="1430.1" x2="2785.0" y2="1710.9" stroke="#cfcfcf" stroke-width="2" stroke-dasharray="6,5"/>
<line x1="2933.8" y1="1430.1" x2="2933.8" y2="1710.9" stroke="#cfcfcf" stroke-width="2" stroke-dasharray="6,5"/>
<line x1="3007.8" y1="1430.1" x2="3007.8" y2="1710.9" stroke="#cfcfcf" stroke-width="2" stroke-dasharray="6,5"/>
<line x1="1660.0" y1="1430.1" x2="1668.8" y2="1430.1" stroke="#666666" stroke-width="2" />
<text x="1656.0" y="1438.3" font-size="23.10" fill="#666666" stroke="#666666" stroke-width="0.508169014084507" text-anchor="end" textLength="48.5" lengthAdjust="spacingAndGlyphs" >1000</text>
<line x1="1660.0" y1="1500.3" x2="1668.8" y2="1500.3" stroke="#666666" stroke-width="2" />
<text x="1656.0" y="1508.5" font-size="23.10" fill="#666666" stroke="#666666" stroke-width="0.508169014084507" text-anchor="end" textLength="36.4" lengthAdjust="spacingAndGlyphs" >750</text>
<line x1="1660.0" y1="1570.5" x2="1668.8" y2="1570.5" stroke="#666666" stroke-width="2" />
<text x="1656.0" y="1578.7" font-size="23.10" fill="#666666" stroke="#666666" stroke-width="0.508169014084507" text-anchor="end" textLength="36.4" lengthAdjust="spacingAndGlyphs" >500</text>
<line x1="1660.0" y1="1640.7" x2="1668.8" y2="1640.7" stroke="#666666" stroke-width="2" />
<text x="1656.0" y="1648.9" font-size="23.10" fill="#666666" stroke="#666666" stroke-width="0.508169014084507" text-anchor="end" textLength="36.4" lengthAdjust="spacingAndGlyphs" >250</text>
<line x1="1660.0" y1="1710.9" x2="1668.8" y2="1710.9" stroke="#666666" stroke-width="2" />
<text x="1656.0" y="1719.1" font-size="23.10" fill="#666666" stroke="#666666" stroke-width="0.508169014084507" text-anchor="end" textLength="12.1" lengthAdjust="spacingAndGlyphs" >0</text>
<rect x="1684.2" y="1710.1" width="23.5" height="0.8" fill="#ff9b9b" />
<rect x="1714.2" y="1710.1" width="23.5" height="0.8" fill="#ff0000" />
<rect x="1774.0" y="1710.1" width="23.5" height="0.8" fill="#cbaed8" />
<rect x="1833.0" y="1710.0" width="23.5" height="0.9" fill="#ff9b9b" />
<rect x="1863.0" y="1710.1" width="23.5" height="0.8" fill="#ff0000" />
<rect x="1922.8" y="1710.1" width="23.5" height="0.8" fill="#cbaed8" />
<rect x="1981.8" y="1709.4" width="23.5" height="1.5" fill="#ff9b9b" />
<rect x="2011.8" y="1709.9" width="23.5" height="1.0" fill="#ff0000" />
<rect x="2071.6" y="1710.1" width="23.5" height="0.8" fill="#cbaed8" />
<rect x="2130.6" y="1708.5" width="23.5" height="2.4" fill="#ff9b9b" />
<rect x="2160.6" y="1709.3" width="23.5" height="1.6" fill="#ff0000" />
<rect x="2220.4" y="1709.9" width="23.5" height="1.0" fill="#cbaed8" />
<rect x="2279.4" y="1703.5" width="23.5" height="7.4" fill="#ff9b9b" />
<rect x="2309.4" y="1707.5" width="23.5" height="3.4" fill="#ff0000" />
<rect x="2369.2" y="1706.9" width="23.5" height="4.0" fill="#cbaed8" />
<rect x="2428.2" y="1694.4" width="23.5" height="16.5" fill="#ff9b9b" />
<rect x="2458.2" y="1699.5" width="23.5" height="11.4" fill="#ff0000" />
<rect x="2518.0" y="1693.8" width="23.5" height="17.1" fill="#cbaed8" />
<rect x="2577.0" y="1672.6" width="23.5" height="38.3" fill="#ff9b9b" />
<rect x="2607.0" y="1701.1" width="23.5" height="9.8" fill="#ff0000" />
<rect x="2636.9" y="1683.7" width="23.5" height="27.2" fill="#700035" />
<rect x="2666.8" y="1638.6" width="23.5" height="72.3" fill="#cbaed8" />
<rect x="2725.8" y="1655.8" width="23.5" height="55.1" fill="#ff9b9b" />
<rect x="2755.8" y="1703.5" width="23.5" height="7.4" fill="#ff0000" />
<rect x="2785.7" y="1660.1" width="23.5" height="50.8" fill="#700035" />
<rect x="2815.6" y="1544.1" width="23.5" height="166.8" fill="#cbaed8" />
<rect x="2874.6" y="1649.0" width="23.5" height="61.9" fill="#ff9b9b" />
<rect x="2904.6" y="1701.8" width="23.5" height="9.1" fill="#ff0000" />
<rect x="2934.5" y="1641.0" width="23.5" height="69.9" fill="#700035" />
<rect x="2964.4" y="1477.2" width="23.5" height="233.7" fill="#cbaed8" />
<line x1="1668.8" y1="1430.1" x2="1668.8" y2="1710.9" stroke="#666666" stroke-width="2" />
<line x1="1668.8" y1="1710.9" x2="3007.8" y2="1710.9" stroke="#666666" stroke-width="2" />
<line x1="1743.4" y1="1710.9" x2="1743.4" y2="1719.9" stroke="#666666" stroke-width="2" />
<text x="1743.4" y="1742.2" font-size="23.10" fill="#666666" stroke="#666666" stroke-width="0.508169014084507" text-anchor="middle" textLength="32.3" lengthAdjust="spacingAndGlyphs" >0-9</text>
<line x1="1892.2" y1="1710.9" x2="1892.2" y2="1719.9" stroke="#666666" stroke-width="2" />
<text x="1892.2" y="1742.2" font-size="23.10" fill="#666666" stroke="#666666" stroke-width="0.508169014084507" text-anchor="middle" textLength="57.1" lengthAdjust="spacingAndGlyphs" >10-19</text>
<line x1="2041.0" y1="1710.9" x2="2041.0" y2="1719.9" stroke="#666666" stroke-width="2" />
<text x="2041.0" y="1742.2" font-size="23.10" fill="#666666" stroke="#666666" stroke-width="0.508169014084507" text-anchor="middle" textLength="57.1" lengthAdjust="spacingAndGlyphs" >20-29</text>
<line x1="2189.8" y1="1710.9" x2="2189.8" y2="1719.9" stroke="#666666" stroke-width="2" />
<text x="2189.8" y="1742.2" font-size="23.10" fill="#666666" stroke="#666666" stroke-width="0.508169014084507" text-anchor="middle" textLength="57.1" lengthAdjust="spacingAndGlyphs" >30-39</text>
<line x1="2338.6" y1="1710.9" x2="2338.6" y2="1719.9" stroke="#666666" stroke-width="2" />
<text x="2338.6" y="1742.2" font-size="23.10" fill="#666666" stroke="#666666" stroke-width="0.508169014084507" text-anchor="middle" textLength="57.1" lengthAdjust="spacingAndGlyphs" >40-49</text>
<line x1="2487.4" y1="1710.9" x2="2487.4" y2="1719.9" stroke="#666666" stroke-width="2" />
<text x="2487.4" y="1742.2" font-size="23.10" fill="#666666" stroke="#666666" stroke-width="0.508169014084507" text-anchor="middle" textLength="57.1" lengthAdjust="spacingAndGlyphs" >50-59</text>
<line x1="2636.2" y1="1710.9" x2="2636.2" y2="1719.9" stroke="#666666" stroke-width="2" />
<text x="2636.2" y="1742.2" font-size="23.10" fill="#666666" stroke="#666666" stroke-width="0.508169014084507" text-anchor="middle" textLength="57.1" lengthAdjust="spacingAndGlyphs" >60-69</text>
<line x1="2785.0" y1="1710.9" x2="2785.0" y2="1719.9" stroke="#666666" stroke-width="2" />
<text x="2785.0" y="1742.2" font-size="23.10" fill="#666666" stroke="#666666" stroke-width="0.508169014084507" text-anchor="middle" textLength="57.1" lengthAdjust="spacingAndGlyphs" >70-79</text>
<line x1="2933.8" y1="1710.9" x2="2933.8" y2="1719.9" stroke="#666666" stroke-width="2" />
<text x="2933.8" y="1742.2" font-size="23.10" fill="#666666" stroke="#666666" stroke-width="0.508169014084507" text-anchor="middle" textLength="37.9" lengthAdjust="spacingAndGlyphs" >80+</text>
<text transform="translate(1593.1,1539.6) rotate(-90)" font-size="25.5" fill="#111" text-anchor="middle" textLength="58.8" lengthAdjust="spacingAndGlyphs">Cases</text>
<rect x="1957.0" y="1410.0" width="21.8" height="16.0" fill="#ff9b9b" />
<text x="1985.5" y="1421.0" font-size="23.10" fill="#2f3742" stroke="#2f3742" stroke-width="0.508169014084507" textLength="123.4" lengthAdjust="spacingAndGlyphs" >peak severe</text>
<rect x="2125.7" y="1410.0" width="21.8" height="16.0" fill="#ff0000" />
<text x="2154.7" y="1421.0" font-size="23.10" fill="#2f3742" stroke="#2f3742" stroke-width="0.508169014084507" textLength="91.4" lengthAdjust="spacingAndGlyphs" >peak ICU</text>
<rect x="2263.6" y="1410.0" width="21.8" height="16.0" fill="#700035" />
<text x="2292.6" y="1421.0" font-size="23.10" fill="#2f3742" stroke="#2f3742" stroke-width="0.508169014084507" textLength="146.9" lengthAdjust="spacingAndGlyphs" >peak overflow</text>
<rect x="2455.7" y="1410.0" width="21.8" height="16.0" fill="#cbaed8" />
<text x="2485.3" y="1421.0" font-size="23.10" fill="#2f3742" stroke="#2f3742" stroke-width="0.508169014084507" textLength="124.0" lengthAdjust="spacingAndGlyphs" >total deaths</text>
<line x1="1668.8" y1="1768.4" x2="3007.8" y2="1768.4" stroke="#cfcfcf" stroke-width="2" stroke-dasharray="6,5"/>
<line x1="1743.4" y1="1768.4" x2="1743.4" y2="1800.0" stroke="#cfcfcf" stroke-width="2" stroke-dasharray="6,5"/>
<line x1="1892.2" y1="1768.4" x2="1892.2" y2="1800.0" stroke="#cfcfcf" stroke-width="2" stroke-dasharray="6,5"/>
<line x1="2041.0" y1="1768.4" x2="2041.0" y2="1800.0" stroke="#cfcfcf" stroke-width="2" stroke-dasharray="6,5"/>
<line x1="2189.8" y1="1768.4" x2="2189.8" y2="1800.0" stroke="#cfcfcf" stroke-width="2" stroke-dasharray="6,5"/>
<line x1="2338.6" y1="1768.4" x2="2338.6" y2="1800.0" stroke="#cfcfcf" stroke-width="2" stroke-dasharray="6,5"/>
<line x1="2487.4" y1="1768.4" x2="2487.4" y2="1800.0" stroke="#cfcfcf" stroke-width="2" stroke-dasharray="6,5"/>
<line x1="2636.2" y1="1768.4" x2="2636.2" y2="1800.0" stroke="#cfcfcf" stroke-width="2" stroke-dasharray="6,5"/>
<line x1="2785.0" y1="1768.4" x2="2785.0" y2="1800.0" stroke="#cfcfcf" stroke-width="2" stroke-dasharray="6,5"/>
<line x1="2933.8" y1="1768.4" x2="2933.8" y2="1800.0" stroke="#cfcfcf" stroke-width="2" stroke-dasharray="6,5"/>
<line x1="3007.8" y1="1768.4" x2="3007.8" y2="1800.0" stroke="#cfcfcf" stroke-width="2" stroke-dasharray="6,5"/>
<line x1="1668.8" y1="1768.4" x2="1668.8" y2="1800.0" stroke="#666666" stroke-width="2" />
<line x1="1660.0" y1="1768.4" x2="1668.8" y2="1768.4" stroke="#666666" stroke-width="2" />
<text x="1656.0" y="1794.0" font-size="23.10" fill="#666666" stroke="#666666" stroke-width="0.508169014084507" text-anchor="end" textLength="24.2" lengthAdjust="spacingAndGlyphs" >16</text>
<rect x="2428.0" y="1783.2" width="118.0" height="20.0" fill="#aaaaaa" />
</svg>
</body></html>
